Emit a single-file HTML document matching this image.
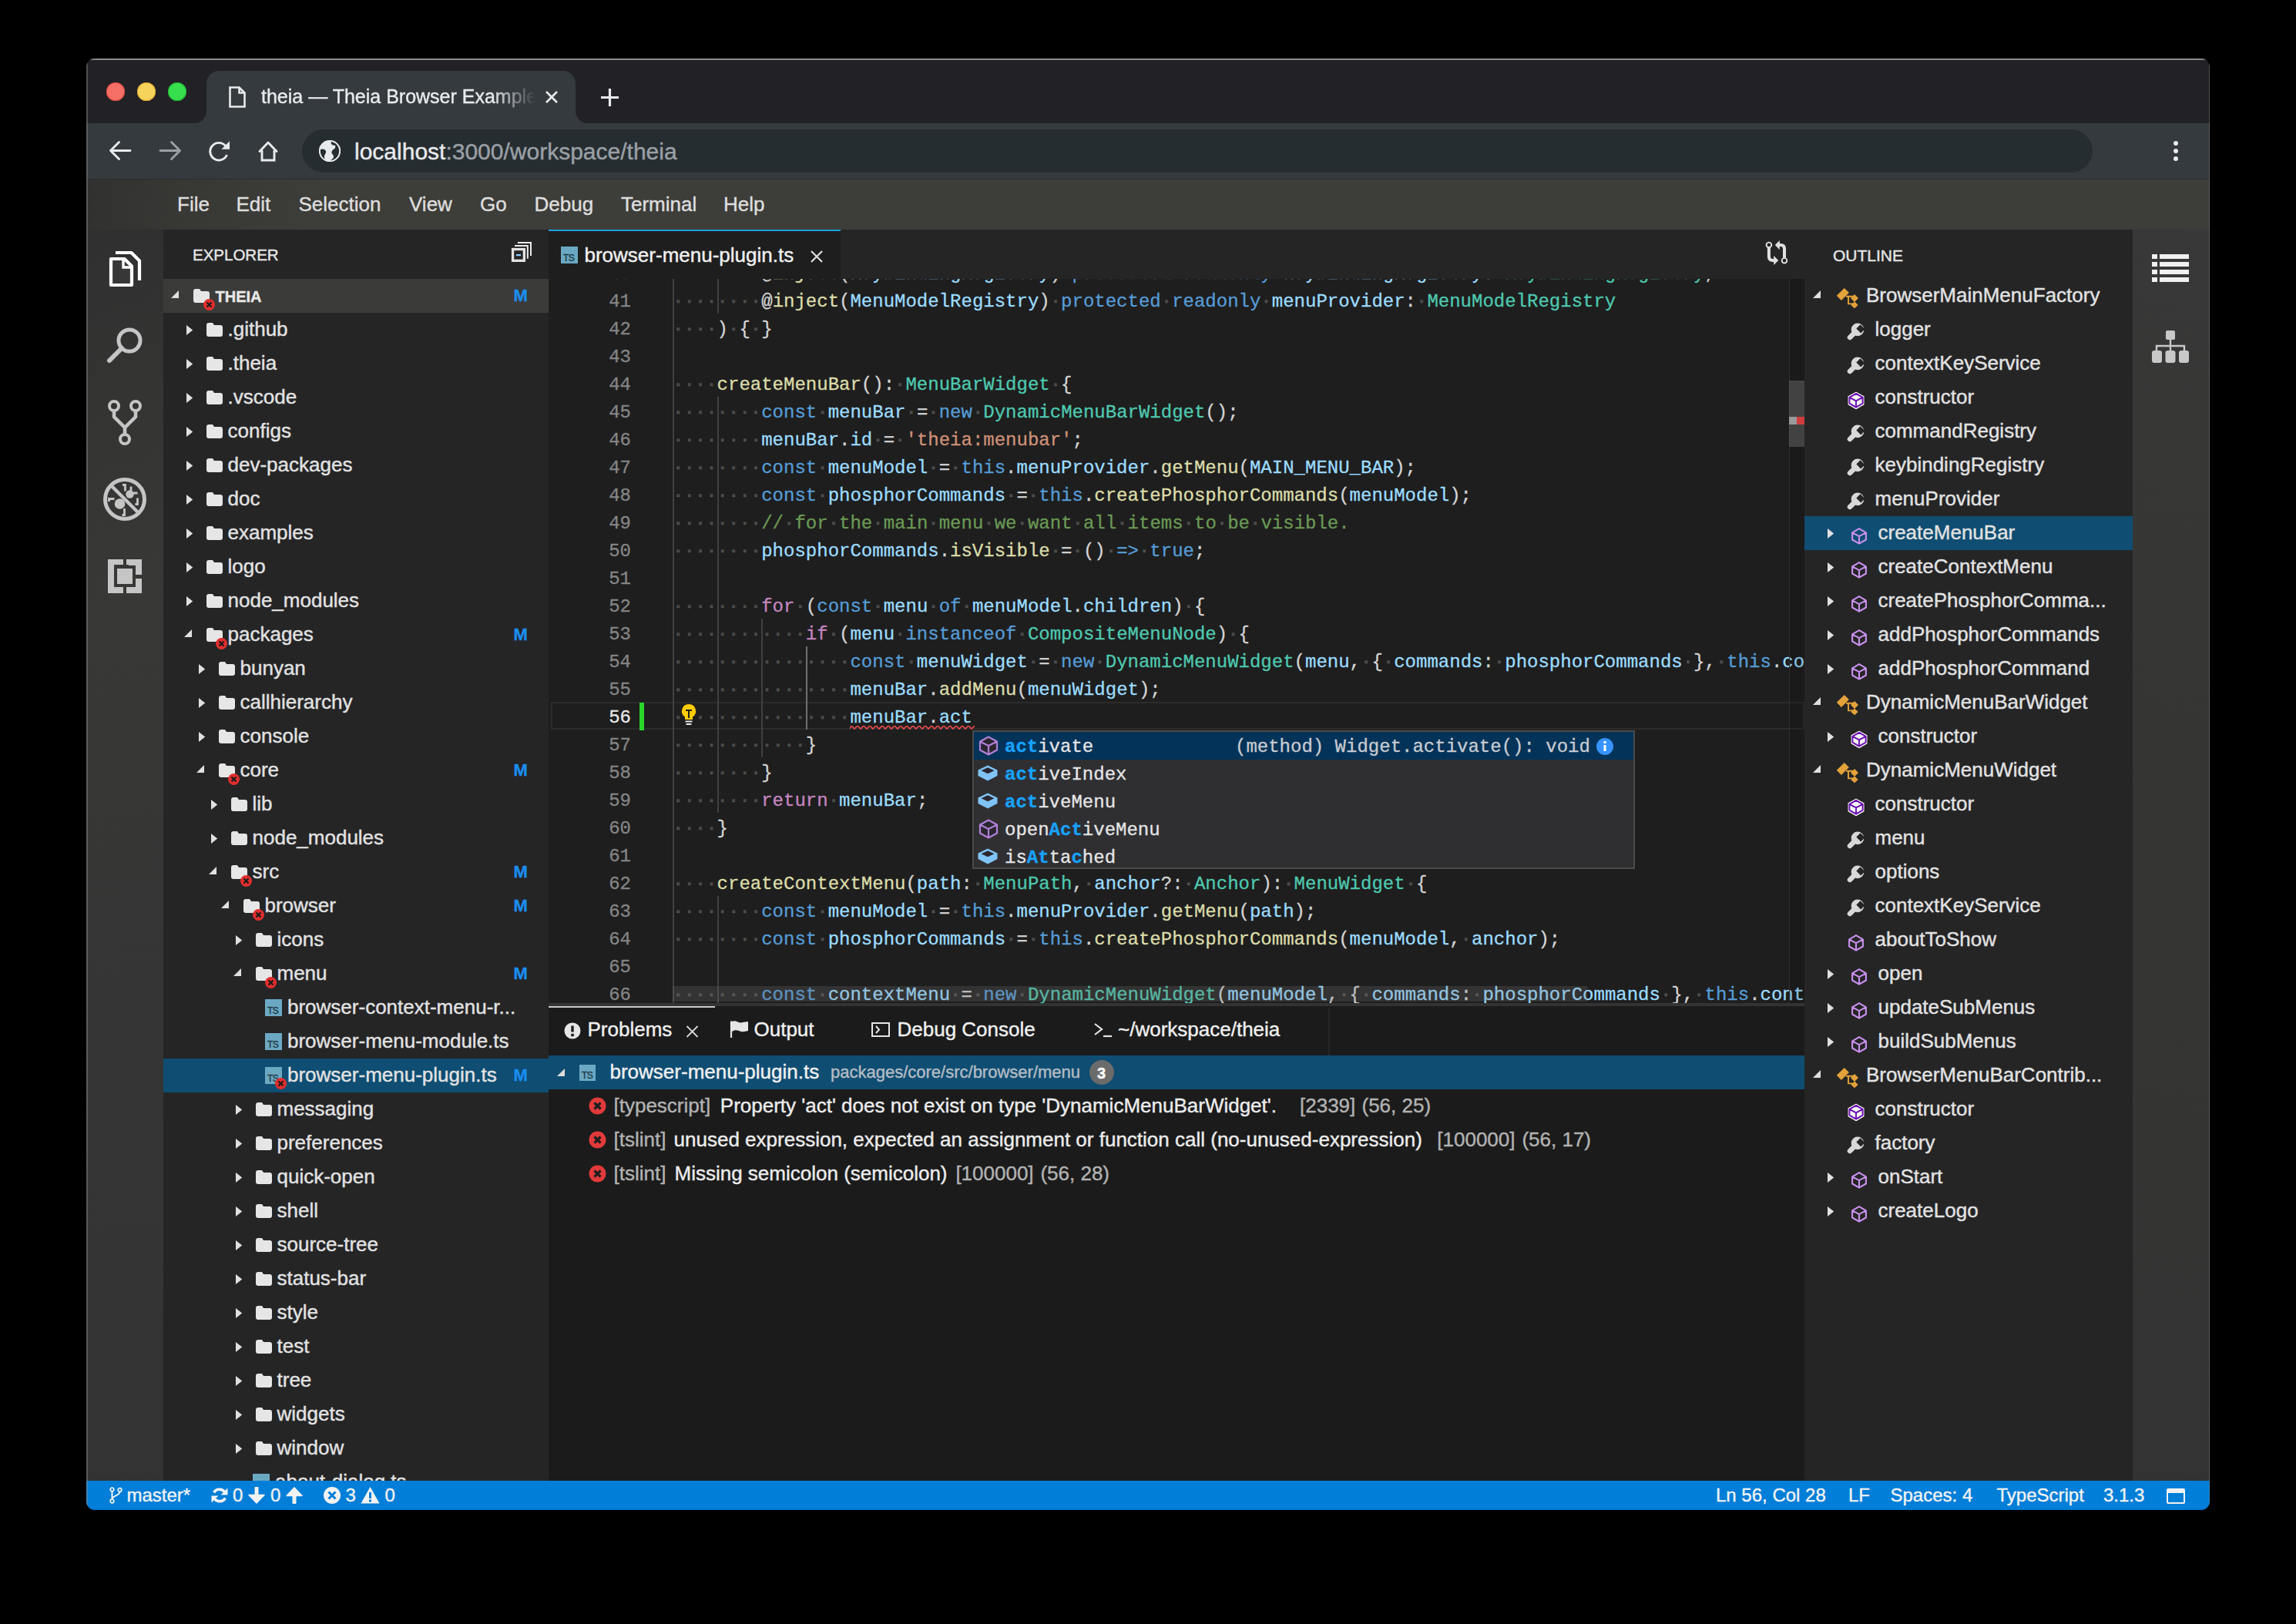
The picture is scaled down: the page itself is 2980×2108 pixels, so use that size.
<!DOCTYPE html><html><head><meta charset="utf-8"><style>
html,body{margin:0;padding:0;background:#000;width:2980px;height:2108px;overflow:hidden}
*{box-sizing:border-box}
.a{position:absolute}
.t{position:absolute;white-space:pre;font-family:"Liberation Sans",sans-serif;-webkit-text-stroke:0.4px currentColor}
.m{position:absolute;white-space:pre;font-family:"Liberation Mono",monospace;-webkit-text-stroke:0.3px currentColor}
#win{position:absolute;left:0;top:0;width:2980px;height:2108px;clip-path:inset(76px 112px 148px 112px round 11px);}

</style></head><body><div id="win">
<div class="a" style="left:112px;top:76px;width:2756px;height:84px;background:#212126;"></div>
<div class="a" style="left:138px;top:107px;width:24px;height:24px;border-radius:50%;background:#f46f66;box-shadow:inset 0 0 0 1px #e2463f;"></div>
<div class="a" style="left:178px;top:107px;width:24px;height:24px;border-radius:50%;background:#f6d35a;box-shadow:inset 0 0 0 1px #dfa62a;"></div>
<div class="a" style="left:218px;top:107px;width:24px;height:24px;border-radius:50%;background:#37df4e;box-shadow:inset 0 0 0 1px #1fb12e;"></div>
<div class="a" style="left:268px;top:92px;width:479px;height:68px;background:#343a3e;border-radius:16px 16px 0 0;"></div>
<div class="a" style="left:252px;top:144px;width:16px;height:16px;background:radial-gradient(circle at 0 0, #212126 15.5px, #343a3e 16.5px);"></div>
<div class="a" style="left:747px;top:144px;width:16px;height:16px;background:radial-gradient(circle at 100% 0, #212126 15.5px, #343a3e 16.5px);"></div>
<svg class="a" style="left:296px;top:111px;" width="24" height="30" viewBox="0 0 24 30"><path d="M2.5 2.5h12l7 7v18h-19z M14.5 2.5v7h7" fill="none" stroke="#e8eaed" stroke-width="2.6" stroke-linejoin="miter"/></svg>
<div class="a" style="left:339px;top:100px;width:356px;height:50px;overflow:hidden;-webkit-mask-image:linear-gradient(to right,#000 300px,transparent 356px);">
<div class="t" style="left:0;top:12.83px;font-size:25px;line-height:25px;color:#e8eaed;">theia — Theia Browser Example</div></div>
<svg class="a" style="left:706px;top:116px;" width="20" height="20" viewBox="0 0 20 20"><path d="M3 3L17 17M17 3L3 17" stroke="#e8eaed" stroke-width="2.6"/></svg>
<svg class="a" style="left:779px;top:114px;" width="25" height="25" viewBox="0 0 25 25"><path d="M12.5 1v23M1 12.5h23" stroke="#e8eaed" stroke-width="3.2"/></svg>
<div class="a" style="left:112px;top:160px;width:2756px;height:73px;background:#343a3e;"></div>
<div class="a" style="left:112px;top:232px;width:2756px;height:1px;background:#2a2c2c;"></div>
<svg class="a" style="left:140px;top:181px;" width="32" height="30" viewBox="0 0 32 30"><path d="M29 14.5H4.5M14.5 3.5L3.5 14.5L14.5 25.5" fill="none" stroke="#e8eaed" stroke-width="2.9" stroke-linecap="round" stroke-linejoin="round"/></svg>
<svg class="a" style="left:205px;top:181px;" width="32" height="30" viewBox="0 0 32 30"><path d="M3 14.5H27.5M17.5 3.5L28.5 14.5L17.5 25.5" fill="none" stroke="#9aa0a6" stroke-width="2.9" stroke-linecap="round" stroke-linejoin="round"/></svg>
<svg class="a" style="left:268px;top:180px;" width="32" height="32" viewBox="0 0 32 32"><path d="M24.8 9.5A11.3 11.3 0 1 0 26.5 21" fill="none" stroke="#e8eaed" stroke-width="2.9"/><path d="M30 3.2V13.8H19.4z" fill="#e8eaed"/></svg>
<svg class="a" style="left:332px;top:180px;" width="32" height="32" viewBox="0 0 32 32"><path d="M5 16.5L16 5L27 16.5" fill="none" stroke="#e8eaed" stroke-width="2.9" stroke-linecap="round" stroke-linejoin="round"/><path d="M8 15V28H24V15" fill="none" stroke="#e8eaed" stroke-width="2.9"/></svg>
<div class="a" style="left:392px;top:168px;width:2324px;height:56px;background:#262d30;border-radius:28px;"></div>
<svg class="a" style="left:414px;top:182px;" width="28" height="28" viewBox="0 0 28 28"><circle cx="14" cy="14" r="13.2" fill="#e8eaed"/><path d="M1.5 12C5 10.5 8.5 12 9 14.5C9.5 17 7 18.5 7 21.5C7 23 7.5 24 8 25C4 23 1.5 19 1.5 14z" fill="#262d30"/><path d="M16 1.5C15 4 16.5 6.5 19 6.5C21.5 6.5 22 8.5 20.5 10.5C19 12.5 17 12.5 16.5 15C16 17.5 18.5 18.5 19 20.5C19.5 22.5 18 24 16 25.5L14.5 26.5C20.5 26.5 26.5 21 26.5 14C26.5 8 22 2.5 16 1.5z" fill="#262d30"/><circle cx="14" cy="14" r="13.2" fill="none" stroke="#e8eaed" stroke-width="2"/></svg>
<div class="t" style="left:460px;top:181.60px;font-size:30px;line-height:30px;color:#e8eaed;">localhost<span style="color:#9aa0a6">:3000/workspace/theia</span></div>
<div class="a" style="left:2821px;top:183px;width:6.4px;height:6.4px;border-radius:50%;background:#e8eaed;"></div>
<div class="a" style="left:2821px;top:193px;width:6.4px;height:6.4px;border-radius:50%;background:#e8eaed;"></div>
<div class="a" style="left:2821px;top:203px;width:6.4px;height:6.4px;border-radius:50%;background:#e8eaed;"></div>
<div class="a" style="left:112px;top:233px;width:2756px;height:65px;background:linear-gradient(100deg,#31312f 0px,#383835 140px,#3d3d39 300px,#3d3d39 100%);"></div>
<div class="t" style="left:230px;top:252.49px;font-size:26px;line-height:26px;color:#dedede;">File</div>
<div class="t" style="left:306.5px;top:252.49px;font-size:26px;line-height:26px;color:#dedede;">Edit</div>
<div class="t" style="left:387.5px;top:252.49px;font-size:26px;line-height:26px;color:#dedede;">Selection</div>
<div class="t" style="left:531px;top:252.49px;font-size:26px;line-height:26px;color:#dedede;">View</div>
<div class="t" style="left:623px;top:252.49px;font-size:26px;line-height:26px;color:#dedede;">Go</div>
<div class="t" style="left:693.5px;top:252.49px;font-size:26px;line-height:26px;color:#dedede;">Debug</div>
<div class="t" style="left:806px;top:252.49px;font-size:26px;line-height:26px;color:#dedede;">Terminal</div>
<div class="t" style="left:939px;top:252.49px;font-size:26px;line-height:26px;color:#dedede;">Help</div>
<div class="a" style="left:112px;top:298px;width:100px;height:1624px;background:linear-gradient(160deg,#303030 0%,#383836 30%,#353535 60%,#333333 100%);"></div>
<svg class="a" style="left:140px;top:322px;" width="46" height="54" viewBox="0 0 46 54"><path d="M10 6H30.5L41 16.5V42" fill="none" stroke="#ffffff" stroke-width="4.2" stroke-linejoin="round"/><path d="M4 14H21.5L31 23.5V48H4z" fill="#373737" stroke="#ffffff" stroke-width="4.2" stroke-linejoin="round"/><path d="M20 14v11h11" fill="none" stroke="#ffffff" stroke-width="3.4"/></svg>
<svg class="a" style="left:136px;top:422px;" width="52" height="52" viewBox="0 0 52 52"><circle cx="32" cy="20" r="14" fill="none" stroke="#c5c5c5" stroke-width="5"/><path d="M22 30L6 46" stroke="#c5c5c5" stroke-width="6" stroke-linecap="round"/></svg>
<svg class="a" style="left:138px;top:518px;" width="48" height="62" viewBox="0 0 48 62"><circle cx="10" cy="9" r="6" fill="none" stroke="#c5c5c5" stroke-width="4"/><circle cx="38" cy="9" r="6" fill="none" stroke="#c5c5c5" stroke-width="4"/><circle cx="24" cy="52" r="6" fill="none" stroke="#c5c5c5" stroke-width="4"/><path d="M10 15v8l14 14v9M38 15v8L24 37" fill="none" stroke="#c5c5c5" stroke-width="4.5"/></svg>
<svg class="a" style="left:132px;top:618px;" width="60" height="60" viewBox="0 0 60 60"><circle cx="30" cy="30" r="25.5" fill="none" stroke="#c5c5c5" stroke-width="5"/><path d="M11 11L49 49" stroke="#c5c5c5" stroke-width="4.5"/><circle cx="23.5" cy="36" r="6.8" fill="#c5c5c5"/><circle cx="36.5" cy="23.5" r="5.2" fill="#c5c5c5"/><path d="M9.5 33v-3.5h7 M29.5 42v8.5h-3 M27 11.5h3.5v8 M38 13.5v7.5 M41 22h5.5 M46.5 28.5v8h-3" fill="none" stroke="#c5c5c5" stroke-width="2.8"/></svg>
<svg class="a" style="left:138px;top:724px;" width="48" height="48" viewBox="0 0 48 48"><path d="M2 2h20v7H10v29h12v8H2z M26 2h20v20h-8V10h-9v-1h-3z M26 38h12V27h8v19H26z" fill="#c5c5c5"/><rect x="14" y="14" width="20" height="20" fill="#c5c5c5"/></svg>
<div class="a" style="left:212px;top:298px;width:500px;height:1624px;background:#252526;"></div>
<div class="t" style="left:250px;top:321.14px;font-size:20.5px;line-height:20.5px;color:#e6e6e6;">EXPLORER</div>
<svg class="a" style="left:662px;top:312px;" width="30" height="30" viewBox="0 0 30 30"><rect x="3.55" y="11.55" width="14.8" height="14.8" fill="none" stroke="#e2e2e2" stroke-width="3.3"/><path d="M6 7H22.8V23.8 M9.9 2.9H27V20" fill="none" stroke="#ececec" stroke-width="2"/><rect x="8" y="18" width="6" height="2.2" fill="#8fd0ff"/></svg>
<div class="a" style="left:212px;top:362px;width:500px;height:44px;background:#3b3b39;"></div>
<svg class="a" style="left:220.5px;top:375.5px;" width="12" height="12" viewBox="0 0 12 12"><path d="M11 1V11H1z" fill="#e0e0e0"/></svg>
<svg class="a" style="left:251px;top:375px;" width="21" height="18" viewBox="0 0 21 18"><path d="M0 3Q0 0 3 0H8L10 3H18Q21 3 21 6V15Q21 18 18 18H3Q0 18 0 15z" fill="#e6e6e6"/></svg>
<svg class="a" style="left:262.5px;top:386.5px;" width="17.0" height="17.0" viewBox="0 0 17.0 17.0"><circle cx="8.5" cy="8.5" r="7.5" fill="#e02e2e" stroke="#252526" stroke-width="0"/><path d="M5.5 5.5L11.5 11.5M11.5 5.5L5.5 11.5" stroke="#1a1a1a" stroke-width="2.2"/></svg>
<div class="t" style="left:279.5px;top:374.57px;font-size:20px;line-height:20px;color:#e8e8e8;font-weight:bold;">THEIA</div>
<div class="t" style="left:666.5px;top:373.37px;font-size:22px;line-height:22px;color:#1a8ef0;font-weight:bold;">M</div>
<svg class="a" style="left:240.5px;top:421px;" width="10" height="16" viewBox="0 0 10 16"><path d="M1 1L9.2 7.4L1 13.9z" fill="#e0e0e0"/></svg>
<svg class="a" style="left:267.5px;top:419px;" width="21" height="18" viewBox="0 0 21 18"><path d="M0 3Q0 0 3 0H8L10 3H18Q21 3 21 6V15Q21 18 18 18H3Q0 18 0 15z" fill="#e6e6e6"/></svg>
<div class="t" style="left:295.5px;top:413.79px;font-size:26px;line-height:26px;color:#e2e2e2;">.github</div>
<svg class="a" style="left:240.5px;top:465px;" width="10" height="16" viewBox="0 0 10 16"><path d="M1 1L9.2 7.4L1 13.9z" fill="#e0e0e0"/></svg>
<svg class="a" style="left:267.5px;top:463px;" width="21" height="18" viewBox="0 0 21 18"><path d="M0 3Q0 0 3 0H8L10 3H18Q21 3 21 6V15Q21 18 18 18H3Q0 18 0 15z" fill="#e6e6e6"/></svg>
<div class="t" style="left:295.5px;top:457.79px;font-size:26px;line-height:26px;color:#e2e2e2;">.theia</div>
<svg class="a" style="left:240.5px;top:509px;" width="10" height="16" viewBox="0 0 10 16"><path d="M1 1L9.2 7.4L1 13.9z" fill="#e0e0e0"/></svg>
<svg class="a" style="left:267.5px;top:507px;" width="21" height="18" viewBox="0 0 21 18"><path d="M0 3Q0 0 3 0H8L10 3H18Q21 3 21 6V15Q21 18 18 18H3Q0 18 0 15z" fill="#e6e6e6"/></svg>
<div class="t" style="left:295.5px;top:501.79px;font-size:26px;line-height:26px;color:#e2e2e2;">.vscode</div>
<svg class="a" style="left:240.5px;top:553px;" width="10" height="16" viewBox="0 0 10 16"><path d="M1 1L9.2 7.4L1 13.9z" fill="#e0e0e0"/></svg>
<svg class="a" style="left:267.5px;top:551px;" width="21" height="18" viewBox="0 0 21 18"><path d="M0 3Q0 0 3 0H8L10 3H18Q21 3 21 6V15Q21 18 18 18H3Q0 18 0 15z" fill="#e6e6e6"/></svg>
<div class="t" style="left:295.5px;top:545.79px;font-size:26px;line-height:26px;color:#e2e2e2;">configs</div>
<svg class="a" style="left:240.5px;top:597px;" width="10" height="16" viewBox="0 0 10 16"><path d="M1 1L9.2 7.4L1 13.9z" fill="#e0e0e0"/></svg>
<svg class="a" style="left:267.5px;top:595px;" width="21" height="18" viewBox="0 0 21 18"><path d="M0 3Q0 0 3 0H8L10 3H18Q21 3 21 6V15Q21 18 18 18H3Q0 18 0 15z" fill="#e6e6e6"/></svg>
<div class="t" style="left:295.5px;top:589.79px;font-size:26px;line-height:26px;color:#e2e2e2;">dev-packages</div>
<svg class="a" style="left:240.5px;top:641px;" width="10" height="16" viewBox="0 0 10 16"><path d="M1 1L9.2 7.4L1 13.9z" fill="#e0e0e0"/></svg>
<svg class="a" style="left:267.5px;top:639px;" width="21" height="18" viewBox="0 0 21 18"><path d="M0 3Q0 0 3 0H8L10 3H18Q21 3 21 6V15Q21 18 18 18H3Q0 18 0 15z" fill="#e6e6e6"/></svg>
<div class="t" style="left:295.5px;top:633.79px;font-size:26px;line-height:26px;color:#e2e2e2;">doc</div>
<svg class="a" style="left:240.5px;top:685px;" width="10" height="16" viewBox="0 0 10 16"><path d="M1 1L9.2 7.4L1 13.9z" fill="#e0e0e0"/></svg>
<svg class="a" style="left:267.5px;top:683px;" width="21" height="18" viewBox="0 0 21 18"><path d="M0 3Q0 0 3 0H8L10 3H18Q21 3 21 6V15Q21 18 18 18H3Q0 18 0 15z" fill="#e6e6e6"/></svg>
<div class="t" style="left:295.5px;top:677.79px;font-size:26px;line-height:26px;color:#e2e2e2;">examples</div>
<svg class="a" style="left:240.5px;top:729px;" width="10" height="16" viewBox="0 0 10 16"><path d="M1 1L9.2 7.4L1 13.9z" fill="#e0e0e0"/></svg>
<svg class="a" style="left:267.5px;top:727px;" width="21" height="18" viewBox="0 0 21 18"><path d="M0 3Q0 0 3 0H8L10 3H18Q21 3 21 6V15Q21 18 18 18H3Q0 18 0 15z" fill="#e6e6e6"/></svg>
<div class="t" style="left:295.5px;top:721.79px;font-size:26px;line-height:26px;color:#e2e2e2;">logo</div>
<svg class="a" style="left:240.5px;top:773px;" width="10" height="16" viewBox="0 0 10 16"><path d="M1 1L9.2 7.4L1 13.9z" fill="#e0e0e0"/></svg>
<svg class="a" style="left:267.5px;top:771px;" width="21" height="18" viewBox="0 0 21 18"><path d="M0 3Q0 0 3 0H8L10 3H18Q21 3 21 6V15Q21 18 18 18H3Q0 18 0 15z" fill="#e6e6e6"/></svg>
<div class="t" style="left:295.5px;top:765.79px;font-size:26px;line-height:26px;color:#e2e2e2;">node_modules</div>
<svg class="a" style="left:237.5px;top:815.5px;" width="12" height="12" viewBox="0 0 12 12"><path d="M11 1V11H1z" fill="#e0e0e0"/></svg>
<svg class="a" style="left:267.5px;top:815px;" width="21" height="18" viewBox="0 0 21 18"><path d="M0 3Q0 0 3 0H8L10 3H18Q21 3 21 6V15Q21 18 18 18H3Q0 18 0 15z" fill="#e6e6e6"/></svg>
<svg class="a" style="left:279.0px;top:826.5px;" width="17.0" height="17.0" viewBox="0 0 17.0 17.0"><circle cx="8.5" cy="8.5" r="7.5" fill="#e02e2e" stroke="#252526" stroke-width="0"/><path d="M5.5 5.5L11.5 11.5M11.5 5.5L5.5 11.5" stroke="#1a1a1a" stroke-width="2.2"/></svg>
<div class="t" style="left:295.5px;top:809.79px;font-size:26px;line-height:26px;color:#e2e2e2;">packages</div>
<div class="t" style="left:666.5px;top:813.37px;font-size:22px;line-height:22px;color:#1a8ef0;font-weight:bold;">M</div>
<svg class="a" style="left:256.5px;top:861px;" width="10" height="16" viewBox="0 0 10 16"><path d="M1 1L9.2 7.4L1 13.9z" fill="#e0e0e0"/></svg>
<svg class="a" style="left:283.5px;top:859px;" width="21" height="18" viewBox="0 0 21 18"><path d="M0 3Q0 0 3 0H8L10 3H18Q21 3 21 6V15Q21 18 18 18H3Q0 18 0 15z" fill="#e6e6e6"/></svg>
<div class="t" style="left:311.5px;top:853.79px;font-size:26px;line-height:26px;color:#e2e2e2;">bunyan</div>
<svg class="a" style="left:256.5px;top:905px;" width="10" height="16" viewBox="0 0 10 16"><path d="M1 1L9.2 7.4L1 13.9z" fill="#e0e0e0"/></svg>
<svg class="a" style="left:283.5px;top:903px;" width="21" height="18" viewBox="0 0 21 18"><path d="M0 3Q0 0 3 0H8L10 3H18Q21 3 21 6V15Q21 18 18 18H3Q0 18 0 15z" fill="#e6e6e6"/></svg>
<div class="t" style="left:311.5px;top:897.79px;font-size:26px;line-height:26px;color:#e2e2e2;">callhierarchy</div>
<svg class="a" style="left:256.5px;top:949px;" width="10" height="16" viewBox="0 0 10 16"><path d="M1 1L9.2 7.4L1 13.9z" fill="#e0e0e0"/></svg>
<svg class="a" style="left:283.5px;top:947px;" width="21" height="18" viewBox="0 0 21 18"><path d="M0 3Q0 0 3 0H8L10 3H18Q21 3 21 6V15Q21 18 18 18H3Q0 18 0 15z" fill="#e6e6e6"/></svg>
<div class="t" style="left:311.5px;top:941.79px;font-size:26px;line-height:26px;color:#e2e2e2;">console</div>
<svg class="a" style="left:253.5px;top:991.5px;" width="12" height="12" viewBox="0 0 12 12"><path d="M11 1V11H1z" fill="#e0e0e0"/></svg>
<svg class="a" style="left:283.5px;top:991px;" width="21" height="18" viewBox="0 0 21 18"><path d="M0 3Q0 0 3 0H8L10 3H18Q21 3 21 6V15Q21 18 18 18H3Q0 18 0 15z" fill="#e6e6e6"/></svg>
<svg class="a" style="left:295.0px;top:1002.5px;" width="17.0" height="17.0" viewBox="0 0 17.0 17.0"><circle cx="8.5" cy="8.5" r="7.5" fill="#e02e2e" stroke="#252526" stroke-width="0"/><path d="M5.5 5.5L11.5 11.5M11.5 5.5L5.5 11.5" stroke="#1a1a1a" stroke-width="2.2"/></svg>
<div class="t" style="left:311.5px;top:985.79px;font-size:26px;line-height:26px;color:#e2e2e2;">core</div>
<div class="t" style="left:666.5px;top:989.37px;font-size:22px;line-height:22px;color:#1a8ef0;font-weight:bold;">M</div>
<svg class="a" style="left:272.5px;top:1037px;" width="10" height="16" viewBox="0 0 10 16"><path d="M1 1L9.2 7.4L1 13.9z" fill="#e0e0e0"/></svg>
<svg class="a" style="left:299.5px;top:1035px;" width="21" height="18" viewBox="0 0 21 18"><path d="M0 3Q0 0 3 0H8L10 3H18Q21 3 21 6V15Q21 18 18 18H3Q0 18 0 15z" fill="#e6e6e6"/></svg>
<div class="t" style="left:327.5px;top:1029.79px;font-size:26px;line-height:26px;color:#e2e2e2;">lib</div>
<svg class="a" style="left:272.5px;top:1081px;" width="10" height="16" viewBox="0 0 10 16"><path d="M1 1L9.2 7.4L1 13.9z" fill="#e0e0e0"/></svg>
<svg class="a" style="left:299.5px;top:1079px;" width="21" height="18" viewBox="0 0 21 18"><path d="M0 3Q0 0 3 0H8L10 3H18Q21 3 21 6V15Q21 18 18 18H3Q0 18 0 15z" fill="#e6e6e6"/></svg>
<div class="t" style="left:327.5px;top:1073.79px;font-size:26px;line-height:26px;color:#e2e2e2;">node_modules</div>
<svg class="a" style="left:269.5px;top:1123.5px;" width="12" height="12" viewBox="0 0 12 12"><path d="M11 1V11H1z" fill="#e0e0e0"/></svg>
<svg class="a" style="left:299.5px;top:1123px;" width="21" height="18" viewBox="0 0 21 18"><path d="M0 3Q0 0 3 0H8L10 3H18Q21 3 21 6V15Q21 18 18 18H3Q0 18 0 15z" fill="#e6e6e6"/></svg>
<svg class="a" style="left:311.0px;top:1134.5px;" width="17.0" height="17.0" viewBox="0 0 17.0 17.0"><circle cx="8.5" cy="8.5" r="7.5" fill="#e02e2e" stroke="#252526" stroke-width="0"/><path d="M5.5 5.5L11.5 11.5M11.5 5.5L5.5 11.5" stroke="#1a1a1a" stroke-width="2.2"/></svg>
<div class="t" style="left:327.5px;top:1117.79px;font-size:26px;line-height:26px;color:#e2e2e2;">src</div>
<div class="t" style="left:666.5px;top:1121.37px;font-size:22px;line-height:22px;color:#1a8ef0;font-weight:bold;">M</div>
<svg class="a" style="left:285.5px;top:1167.5px;" width="12" height="12" viewBox="0 0 12 12"><path d="M11 1V11H1z" fill="#e0e0e0"/></svg>
<svg class="a" style="left:315.5px;top:1167px;" width="21" height="18" viewBox="0 0 21 18"><path d="M0 3Q0 0 3 0H8L10 3H18Q21 3 21 6V15Q21 18 18 18H3Q0 18 0 15z" fill="#e6e6e6"/></svg>
<svg class="a" style="left:327.0px;top:1178.5px;" width="17.0" height="17.0" viewBox="0 0 17.0 17.0"><circle cx="8.5" cy="8.5" r="7.5" fill="#e02e2e" stroke="#252526" stroke-width="0"/><path d="M5.5 5.5L11.5 11.5M11.5 5.5L5.5 11.5" stroke="#1a1a1a" stroke-width="2.2"/></svg>
<div class="t" style="left:343.5px;top:1161.79px;font-size:26px;line-height:26px;color:#e2e2e2;">browser</div>
<div class="t" style="left:666.5px;top:1165.37px;font-size:22px;line-height:22px;color:#1a8ef0;font-weight:bold;">M</div>
<svg class="a" style="left:304.5px;top:1213px;" width="10" height="16" viewBox="0 0 10 16"><path d="M1 1L9.2 7.4L1 13.9z" fill="#e0e0e0"/></svg>
<svg class="a" style="left:331.5px;top:1211px;" width="21" height="18" viewBox="0 0 21 18"><path d="M0 3Q0 0 3 0H8L10 3H18Q21 3 21 6V15Q21 18 18 18H3Q0 18 0 15z" fill="#e6e6e6"/></svg>
<div class="t" style="left:359.5px;top:1205.79px;font-size:26px;line-height:26px;color:#e2e2e2;">icons</div>
<svg class="a" style="left:301.5px;top:1255.5px;" width="12" height="12" viewBox="0 0 12 12"><path d="M11 1V11H1z" fill="#e0e0e0"/></svg>
<svg class="a" style="left:331.5px;top:1255px;" width="21" height="18" viewBox="0 0 21 18"><path d="M0 3Q0 0 3 0H8L10 3H18Q21 3 21 6V15Q21 18 18 18H3Q0 18 0 15z" fill="#e6e6e6"/></svg>
<svg class="a" style="left:343.0px;top:1266.5px;" width="17.0" height="17.0" viewBox="0 0 17.0 17.0"><circle cx="8.5" cy="8.5" r="7.5" fill="#e02e2e" stroke="#252526" stroke-width="0"/><path d="M5.5 5.5L11.5 11.5M11.5 5.5L5.5 11.5" stroke="#1a1a1a" stroke-width="2.2"/></svg>
<div class="t" style="left:359.5px;top:1249.79px;font-size:26px;line-height:26px;color:#e2e2e2;">menu</div>
<div class="t" style="left:666.5px;top:1253.37px;font-size:22px;line-height:22px;color:#1a8ef0;font-weight:bold;">M</div>
<div class="a" style="left:344px;top:1297.0px;width:22px;height:22px;background:#6ba9c3;"></div>
<div class="t" style="left:347px;top:1306px;font-size:12px;line-height:12px;color:#1f3a46;letter-spacing:-0.5px;">TS</div>
<div class="t" style="left:373px;top:1293.79px;font-size:26px;line-height:26px;color:#e2e2e2;">browser-context-menu-r...</div>
<div class="a" style="left:344px;top:1341.0px;width:22px;height:22px;background:#6ba9c3;"></div>
<div class="t" style="left:347px;top:1350px;font-size:12px;line-height:12px;color:#1f3a46;letter-spacing:-0.5px;">TS</div>
<div class="t" style="left:373px;top:1337.79px;font-size:26px;line-height:26px;color:#e2e2e2;">browser-menu-module.ts</div>
<div class="a" style="left:212px;top:1374px;width:508px;height:44px;background:#0f4d72;"></div>
<div class="a" style="left:344px;top:1385.0px;width:22px;height:22px;background:#6ba9c3;"></div>
<div class="t" style="left:347px;top:1394px;font-size:12px;line-height:12px;color:#1f3a46;letter-spacing:-0.5px;">TS</div>
<svg class="a" style="left:355.5px;top:1397.5px;" width="17.0" height="17.0" viewBox="0 0 17.0 17.0"><circle cx="8.5" cy="8.5" r="7.5" fill="#e02e2e" stroke="#252526" stroke-width="0"/><path d="M5.5 5.5L11.5 11.5M11.5 5.5L5.5 11.5" stroke="#1a1a1a" stroke-width="2.2"/></svg>
<div class="t" style="left:373px;top:1381.79px;font-size:26px;line-height:26px;color:#e2e2e2;">browser-menu-plugin.ts</div>
<div class="t" style="left:666.5px;top:1385.37px;font-size:22px;line-height:22px;color:#1a8ef0;font-weight:bold;">M</div>
<svg class="a" style="left:304.5px;top:1433px;" width="10" height="16" viewBox="0 0 10 16"><path d="M1 1L9.2 7.4L1 13.9z" fill="#e0e0e0"/></svg>
<svg class="a" style="left:331.5px;top:1431px;" width="21" height="18" viewBox="0 0 21 18"><path d="M0 3Q0 0 3 0H8L10 3H18Q21 3 21 6V15Q21 18 18 18H3Q0 18 0 15z" fill="#e6e6e6"/></svg>
<div class="t" style="left:359.5px;top:1425.79px;font-size:26px;line-height:26px;color:#e2e2e2;">messaging</div>
<svg class="a" style="left:304.5px;top:1477px;" width="10" height="16" viewBox="0 0 10 16"><path d="M1 1L9.2 7.4L1 13.9z" fill="#e0e0e0"/></svg>
<svg class="a" style="left:331.5px;top:1475px;" width="21" height="18" viewBox="0 0 21 18"><path d="M0 3Q0 0 3 0H8L10 3H18Q21 3 21 6V15Q21 18 18 18H3Q0 18 0 15z" fill="#e6e6e6"/></svg>
<div class="t" style="left:359.5px;top:1469.79px;font-size:26px;line-height:26px;color:#e2e2e2;">preferences</div>
<svg class="a" style="left:304.5px;top:1521px;" width="10" height="16" viewBox="0 0 10 16"><path d="M1 1L9.2 7.4L1 13.9z" fill="#e0e0e0"/></svg>
<svg class="a" style="left:331.5px;top:1519px;" width="21" height="18" viewBox="0 0 21 18"><path d="M0 3Q0 0 3 0H8L10 3H18Q21 3 21 6V15Q21 18 18 18H3Q0 18 0 15z" fill="#e6e6e6"/></svg>
<div class="t" style="left:359.5px;top:1513.79px;font-size:26px;line-height:26px;color:#e2e2e2;">quick-open</div>
<svg class="a" style="left:304.5px;top:1565px;" width="10" height="16" viewBox="0 0 10 16"><path d="M1 1L9.2 7.4L1 13.9z" fill="#e0e0e0"/></svg>
<svg class="a" style="left:331.5px;top:1563px;" width="21" height="18" viewBox="0 0 21 18"><path d="M0 3Q0 0 3 0H8L10 3H18Q21 3 21 6V15Q21 18 18 18H3Q0 18 0 15z" fill="#e6e6e6"/></svg>
<div class="t" style="left:359.5px;top:1557.79px;font-size:26px;line-height:26px;color:#e2e2e2;">shell</div>
<svg class="a" style="left:304.5px;top:1609px;" width="10" height="16" viewBox="0 0 10 16"><path d="M1 1L9.2 7.4L1 13.9z" fill="#e0e0e0"/></svg>
<svg class="a" style="left:331.5px;top:1607px;" width="21" height="18" viewBox="0 0 21 18"><path d="M0 3Q0 0 3 0H8L10 3H18Q21 3 21 6V15Q21 18 18 18H3Q0 18 0 15z" fill="#e6e6e6"/></svg>
<div class="t" style="left:359.5px;top:1601.79px;font-size:26px;line-height:26px;color:#e2e2e2;">source-tree</div>
<svg class="a" style="left:304.5px;top:1653px;" width="10" height="16" viewBox="0 0 10 16"><path d="M1 1L9.2 7.4L1 13.9z" fill="#e0e0e0"/></svg>
<svg class="a" style="left:331.5px;top:1651px;" width="21" height="18" viewBox="0 0 21 18"><path d="M0 3Q0 0 3 0H8L10 3H18Q21 3 21 6V15Q21 18 18 18H3Q0 18 0 15z" fill="#e6e6e6"/></svg>
<div class="t" style="left:359.5px;top:1645.79px;font-size:26px;line-height:26px;color:#e2e2e2;">status-bar</div>
<svg class="a" style="left:304.5px;top:1697px;" width="10" height="16" viewBox="0 0 10 16"><path d="M1 1L9.2 7.4L1 13.9z" fill="#e0e0e0"/></svg>
<svg class="a" style="left:331.5px;top:1695px;" width="21" height="18" viewBox="0 0 21 18"><path d="M0 3Q0 0 3 0H8L10 3H18Q21 3 21 6V15Q21 18 18 18H3Q0 18 0 15z" fill="#e6e6e6"/></svg>
<div class="t" style="left:359.5px;top:1689.79px;font-size:26px;line-height:26px;color:#e2e2e2;">style</div>
<svg class="a" style="left:304.5px;top:1741px;" width="10" height="16" viewBox="0 0 10 16"><path d="M1 1L9.2 7.4L1 13.9z" fill="#e0e0e0"/></svg>
<svg class="a" style="left:331.5px;top:1739px;" width="21" height="18" viewBox="0 0 21 18"><path d="M0 3Q0 0 3 0H8L10 3H18Q21 3 21 6V15Q21 18 18 18H3Q0 18 0 15z" fill="#e6e6e6"/></svg>
<div class="t" style="left:359.5px;top:1733.79px;font-size:26px;line-height:26px;color:#e2e2e2;">test</div>
<svg class="a" style="left:304.5px;top:1785px;" width="10" height="16" viewBox="0 0 10 16"><path d="M1 1L9.2 7.4L1 13.9z" fill="#e0e0e0"/></svg>
<svg class="a" style="left:331.5px;top:1783px;" width="21" height="18" viewBox="0 0 21 18"><path d="M0 3Q0 0 3 0H8L10 3H18Q21 3 21 6V15Q21 18 18 18H3Q0 18 0 15z" fill="#e6e6e6"/></svg>
<div class="t" style="left:359.5px;top:1777.79px;font-size:26px;line-height:26px;color:#e2e2e2;">tree</div>
<svg class="a" style="left:304.5px;top:1829px;" width="10" height="16" viewBox="0 0 10 16"><path d="M1 1L9.2 7.4L1 13.9z" fill="#e0e0e0"/></svg>
<svg class="a" style="left:331.5px;top:1827px;" width="21" height="18" viewBox="0 0 21 18"><path d="M0 3Q0 0 3 0H8L10 3H18Q21 3 21 6V15Q21 18 18 18H3Q0 18 0 15z" fill="#e6e6e6"/></svg>
<div class="t" style="left:359.5px;top:1821.79px;font-size:26px;line-height:26px;color:#e2e2e2;">widgets</div>
<svg class="a" style="left:304.5px;top:1873px;" width="10" height="16" viewBox="0 0 10 16"><path d="M1 1L9.2 7.4L1 13.9z" fill="#e0e0e0"/></svg>
<svg class="a" style="left:331.5px;top:1871px;" width="21" height="18" viewBox="0 0 21 18"><path d="M0 3Q0 0 3 0H8L10 3H18Q21 3 21 6V15Q21 18 18 18H3Q0 18 0 15z" fill="#e6e6e6"/></svg>
<div class="t" style="left:359.5px;top:1865.79px;font-size:26px;line-height:26px;color:#e2e2e2;">window</div>
<div class="a" style="left:328px;top:1913.0px;width:22px;height:22px;background:#6ba9c3;"></div>
<div class="t" style="left:331px;top:1922px;font-size:12px;line-height:12px;color:#1f3a46;letter-spacing:-0.5px;">TS</div>
<div class="t" style="left:357px;top:1909.79px;font-size:26px;line-height:26px;color:#e2e2e2;">about-dialog.ts</div>
<div class="a" style="left:712px;top:298px;width:1630px;height:64px;background:#252526;"></div>
<div class="a" style="left:712px;top:298px;width:379px;height:64px;background:#1e1e1e;"></div>
<div class="a" style="left:712px;top:298px;width:379px;height:2px;background:#1aa0e0;"></div>
<div class="a" style="left:728px;top:320.0px;width:22px;height:22px;background:#6ba9c3;"></div>
<div class="t" style="left:731px;top:329px;font-size:12px;line-height:12px;color:#1f3a46;letter-spacing:-0.5px;">TS</div>
<div class="t" style="left:758.5px;top:317.99px;font-size:26px;line-height:26px;color:#f0f0f0;">browser-menu-plugin.ts</div>
<svg class="a" style="left:1051px;top:324px;" width="18" height="18" viewBox="0 0 18 18"><path d="M2 2L16 16M16 2L2 16" stroke="#e0e0e0" stroke-width="2.2"/></svg>
<svg class="a" style="left:2286px;top:308px;" width="36" height="42" viewBox="0 0 36 42"><circle cx="9.9" cy="9.9" r="3.3" fill="none" stroke="#e0e0e0" stroke-width="1.9"/><circle cx="30" cy="30.2" r="3.3" fill="none" stroke="#e0e0e0" stroke-width="1.9"/><path d="M9.9 13.2V25Q9.9 30 15 30H17.5 M30 27V15Q30 10.1 25 10.1H22.5" fill="none" stroke="#e0e0e0" stroke-width="4"/><path d="M22.2 30L16.2 24V36z M17.8 10.1L23.8 4V16.2z" fill="#e0e0e0"/></svg>
<div class="a" style="left:712px;top:362px;width:1630px;height:940px;background:#1e1e1e;"></div>
<div class="a" style="left:712px;top:362px;width:1630px;height:940px;overflow:hidden;">
<div class="a" style="left:3px;top:549px;width:1627px;height:36px;border:2px solid #2c2c2c;"></div>
<div class="a" style="left:161.0px;top:-27px;width:2px;height:972px;background:#404040;"></div>
<div class="a" style="left:218.7px;top:-27px;width:2px;height:72px;background:#404040;"></div>
<div class="a" style="left:218.7px;top:153px;width:2px;height:540px;background:#404040;"></div>
<div class="a" style="left:218.7px;top:801px;width:2px;height:144px;background:#404040;"></div>
<div class="a" style="left:276.4px;top:441px;width:2px;height:180px;background:#404040;"></div>
<div class="a" style="left:334.2px;top:477px;width:2px;height:108px;background:#707070;"></div>
<div class="m" style="right:1523px;top:-23.7px;font-size:24px;line-height:36px;color:#858585;text-align:right;">40</div>
<div class="m" style="left:161px;top:-23.7px;font-size:24px;line-height:36px;"><span style="color:rgba(227,228,226,0.22);font-weight:bold">········</span><span style="color:#d4d4d4">@</span><span style="color:#dcdcaa">inject</span><span style="color:#d4d4d4">(</span><span style="color:#9cdcfe">KeybindingRegistry</span><span style="color:#d4d4d4">)</span><span style="color:rgba(227,228,226,0.22);font-weight:bold">·</span><span style="color:#569cd6">protected</span><span style="color:rgba(227,228,226,0.22);font-weight:bold">·</span><span style="color:#569cd6">readonly</span><span style="color:rgba(227,228,226,0.22);font-weight:bold">·</span><span style="color:#9cdcfe">keybindingRegistry</span><span style="color:#d4d4d4">:</span><span style="color:rgba(227,228,226,0.22);font-weight:bold">·</span><span style="color:#4ec9b0">KeybindingRegistry</span><span style="color:#d4d4d4">,</span></div>
<div class="m" style="right:1523px;top:12.3px;font-size:24px;line-height:36px;color:#858585;text-align:right;">41</div>
<div class="m" style="left:161px;top:12.3px;font-size:24px;line-height:36px;"><span style="color:rgba(227,228,226,0.22);font-weight:bold">········</span><span style="color:#d4d4d4">@</span><span style="color:#dcdcaa">inject</span><span style="color:#d4d4d4">(</span><span style="color:#9cdcfe">MenuModelRegistry</span><span style="color:#d4d4d4">)</span><span style="color:rgba(227,228,226,0.22);font-weight:bold">·</span><span style="color:#569cd6">protected</span><span style="color:rgba(227,228,226,0.22);font-weight:bold">·</span><span style="color:#569cd6">readonly</span><span style="color:rgba(227,228,226,0.22);font-weight:bold">·</span><span style="color:#9cdcfe">menuProvider</span><span style="color:#d4d4d4">:</span><span style="color:rgba(227,228,226,0.22);font-weight:bold">·</span><span style="color:#4ec9b0">MenuModelRegistry</span></div>
<div class="m" style="right:1523px;top:48.3px;font-size:24px;line-height:36px;color:#858585;text-align:right;">42</div>
<div class="m" style="left:161px;top:48.3px;font-size:24px;line-height:36px;"><span style="color:rgba(227,228,226,0.22);font-weight:bold">····</span><span style="color:#d4d4d4">)</span><span style="color:rgba(227,228,226,0.22);font-weight:bold">·</span><span style="color:#d4d4d4">{</span><span style="color:rgba(227,228,226,0.22);font-weight:bold">·</span><span style="color:#d4d4d4">}</span></div>
<div class="m" style="right:1523px;top:84.3px;font-size:24px;line-height:36px;color:#858585;text-align:right;">43</div>
<div class="m" style="right:1523px;top:120.3px;font-size:24px;line-height:36px;color:#858585;text-align:right;">44</div>
<div class="m" style="left:161px;top:120.3px;font-size:24px;line-height:36px;"><span style="color:rgba(227,228,226,0.22);font-weight:bold">····</span><span style="color:#dcdcaa">createMenuBar</span><span style="color:#d4d4d4">():</span><span style="color:rgba(227,228,226,0.22);font-weight:bold">·</span><span style="color:#4ec9b0">MenuBarWidget</span><span style="color:rgba(227,228,226,0.22);font-weight:bold">·</span><span style="color:#d4d4d4">{</span></div>
<div class="m" style="right:1523px;top:156.3px;font-size:24px;line-height:36px;color:#858585;text-align:right;">45</div>
<div class="m" style="left:161px;top:156.3px;font-size:24px;line-height:36px;"><span style="color:rgba(227,228,226,0.22);font-weight:bold">········</span><span style="color:#569cd6">const</span><span style="color:rgba(227,228,226,0.22);font-weight:bold">·</span><span style="color:#9cdcfe">menuBar</span><span style="color:rgba(227,228,226,0.22);font-weight:bold">·</span><span style="color:#d4d4d4">=</span><span style="color:rgba(227,228,226,0.22);font-weight:bold">·</span><span style="color:#569cd6">new</span><span style="color:rgba(227,228,226,0.22);font-weight:bold">·</span><span style="color:#4ec9b0">DynamicMenuBarWidget</span><span style="color:#d4d4d4">();</span></div>
<div class="m" style="right:1523px;top:192.3px;font-size:24px;line-height:36px;color:#858585;text-align:right;">46</div>
<div class="m" style="left:161px;top:192.3px;font-size:24px;line-height:36px;"><span style="color:rgba(227,228,226,0.22);font-weight:bold">········</span><span style="color:#9cdcfe">menuBar</span><span style="color:#d4d4d4">.</span><span style="color:#9cdcfe">id</span><span style="color:rgba(227,228,226,0.22);font-weight:bold">·</span><span style="color:#d4d4d4">=</span><span style="color:rgba(227,228,226,0.22);font-weight:bold">·</span><span style="color:#ce9178">&#x27;theia:menubar&#x27;</span><span style="color:#d4d4d4">;</span></div>
<div class="m" style="right:1523px;top:228.3px;font-size:24px;line-height:36px;color:#858585;text-align:right;">47</div>
<div class="m" style="left:161px;top:228.3px;font-size:24px;line-height:36px;"><span style="color:rgba(227,228,226,0.22);font-weight:bold">········</span><span style="color:#569cd6">const</span><span style="color:rgba(227,228,226,0.22);font-weight:bold">·</span><span style="color:#9cdcfe">menuModel</span><span style="color:rgba(227,228,226,0.22);font-weight:bold">·</span><span style="color:#d4d4d4">=</span><span style="color:rgba(227,228,226,0.22);font-weight:bold">·</span><span style="color:#569cd6">this</span><span style="color:#d4d4d4">.</span><span style="color:#9cdcfe">menuProvider</span><span style="color:#d4d4d4">.</span><span style="color:#dcdcaa">getMenu</span><span style="color:#d4d4d4">(</span><span style="color:#9cdcfe">MAIN_MENU_BAR</span><span style="color:#d4d4d4">);</span></div>
<div class="m" style="right:1523px;top:264.3px;font-size:24px;line-height:36px;color:#858585;text-align:right;">48</div>
<div class="m" style="left:161px;top:264.3px;font-size:24px;line-height:36px;"><span style="color:rgba(227,228,226,0.22);font-weight:bold">········</span><span style="color:#569cd6">const</span><span style="color:rgba(227,228,226,0.22);font-weight:bold">·</span><span style="color:#9cdcfe">phosphorCommands</span><span style="color:rgba(227,228,226,0.22);font-weight:bold">·</span><span style="color:#d4d4d4">=</span><span style="color:rgba(227,228,226,0.22);font-weight:bold">·</span><span style="color:#569cd6">this</span><span style="color:#d4d4d4">.</span><span style="color:#dcdcaa">createPhosphorCommands</span><span style="color:#d4d4d4">(</span><span style="color:#9cdcfe">menuModel</span><span style="color:#d4d4d4">);</span></div>
<div class="m" style="right:1523px;top:300.3px;font-size:24px;line-height:36px;color:#858585;text-align:right;">49</div>
<div class="m" style="left:161px;top:300.3px;font-size:24px;line-height:36px;"><span style="color:rgba(227,228,226,0.22);font-weight:bold">········</span><span style="color:#6a9955">//</span><span style="color:rgba(227,228,226,0.22);font-weight:bold">·</span><span style="color:#6a9955">for</span><span style="color:rgba(227,228,226,0.22);font-weight:bold">·</span><span style="color:#6a9955">the</span><span style="color:rgba(227,228,226,0.22);font-weight:bold">·</span><span style="color:#6a9955">main</span><span style="color:rgba(227,228,226,0.22);font-weight:bold">·</span><span style="color:#6a9955">menu</span><span style="color:rgba(227,228,226,0.22);font-weight:bold">·</span><span style="color:#6a9955">we</span><span style="color:rgba(227,228,226,0.22);font-weight:bold">·</span><span style="color:#6a9955">want</span><span style="color:rgba(227,228,226,0.22);font-weight:bold">·</span><span style="color:#6a9955">all</span><span style="color:rgba(227,228,226,0.22);font-weight:bold">·</span><span style="color:#6a9955">items</span><span style="color:rgba(227,228,226,0.22);font-weight:bold">·</span><span style="color:#6a9955">to</span><span style="color:rgba(227,228,226,0.22);font-weight:bold">·</span><span style="color:#6a9955">be</span><span style="color:rgba(227,228,226,0.22);font-weight:bold">·</span><span style="color:#6a9955">visible.</span></div>
<div class="m" style="right:1523px;top:336.3px;font-size:24px;line-height:36px;color:#858585;text-align:right;">50</div>
<div class="m" style="left:161px;top:336.3px;font-size:24px;line-height:36px;"><span style="color:rgba(227,228,226,0.22);font-weight:bold">········</span><span style="color:#9cdcfe">phosphorCommands</span><span style="color:#d4d4d4">.</span><span style="color:#dcdcaa">isVisible</span><span style="color:rgba(227,228,226,0.22);font-weight:bold">·</span><span style="color:#d4d4d4">=</span><span style="color:rgba(227,228,226,0.22);font-weight:bold">·</span><span style="color:#d4d4d4">()</span><span style="color:rgba(227,228,226,0.22);font-weight:bold">·</span><span style="color:#569cd6">=&gt;</span><span style="color:rgba(227,228,226,0.22);font-weight:bold">·</span><span style="color:#569cd6">true</span><span style="color:#d4d4d4">;</span></div>
<div class="m" style="right:1523px;top:372.3px;font-size:24px;line-height:36px;color:#858585;text-align:right;">51</div>
<div class="m" style="right:1523px;top:408.3px;font-size:24px;line-height:36px;color:#858585;text-align:right;">52</div>
<div class="m" style="left:161px;top:408.3px;font-size:24px;line-height:36px;"><span style="color:rgba(227,228,226,0.22);font-weight:bold">········</span><span style="color:#c586c0">for</span><span style="color:rgba(227,228,226,0.22);font-weight:bold">·</span><span style="color:#d4d4d4">(</span><span style="color:#569cd6">const</span><span style="color:rgba(227,228,226,0.22);font-weight:bold">·</span><span style="color:#9cdcfe">menu</span><span style="color:rgba(227,228,226,0.22);font-weight:bold">·</span><span style="color:#569cd6">of</span><span style="color:rgba(227,228,226,0.22);font-weight:bold">·</span><span style="color:#9cdcfe">menuModel</span><span style="color:#d4d4d4">.</span><span style="color:#9cdcfe">children</span><span style="color:#d4d4d4">)</span><span style="color:rgba(227,228,226,0.22);font-weight:bold">·</span><span style="color:#d4d4d4">{</span></div>
<div class="m" style="right:1523px;top:444.3px;font-size:24px;line-height:36px;color:#858585;text-align:right;">53</div>
<div class="m" style="left:161px;top:444.3px;font-size:24px;line-height:36px;"><span style="color:rgba(227,228,226,0.22);font-weight:bold">············</span><span style="color:#c586c0">if</span><span style="color:rgba(227,228,226,0.22);font-weight:bold">·</span><span style="color:#d4d4d4">(</span><span style="color:#9cdcfe">menu</span><span style="color:rgba(227,228,226,0.22);font-weight:bold">·</span><span style="color:#569cd6">instanceof</span><span style="color:rgba(227,228,226,0.22);font-weight:bold">·</span><span style="color:#4ec9b0">CompositeMenuNode</span><span style="color:#d4d4d4">)</span><span style="color:rgba(227,228,226,0.22);font-weight:bold">·</span><span style="color:#d4d4d4">{</span></div>
<div class="m" style="right:1523px;top:480.3px;font-size:24px;line-height:36px;color:#858585;text-align:right;">54</div>
<div class="m" style="left:161px;top:480.3px;font-size:24px;line-height:36px;"><span style="color:rgba(227,228,226,0.22);font-weight:bold">················</span><span style="color:#569cd6">const</span><span style="color:rgba(227,228,226,0.22);font-weight:bold">·</span><span style="color:#9cdcfe">menuWidget</span><span style="color:rgba(227,228,226,0.22);font-weight:bold">·</span><span style="color:#d4d4d4">=</span><span style="color:rgba(227,228,226,0.22);font-weight:bold">·</span><span style="color:#569cd6">new</span><span style="color:rgba(227,228,226,0.22);font-weight:bold">·</span><span style="color:#4ec9b0">DynamicMenuWidget</span><span style="color:#d4d4d4">(</span><span style="color:#9cdcfe">menu</span><span style="color:#d4d4d4">,</span><span style="color:rgba(227,228,226,0.22);font-weight:bold">·</span><span style="color:#d4d4d4">{</span><span style="color:rgba(227,228,226,0.22);font-weight:bold">·</span><span style="color:#9cdcfe">commands</span><span style="color:#d4d4d4">:</span><span style="color:rgba(227,228,226,0.22);font-weight:bold">·</span><span style="color:#9cdcfe">phosphorCommands</span><span style="color:rgba(227,228,226,0.22);font-weight:bold">·</span><span style="color:#d4d4d4">},</span><span style="color:rgba(227,228,226,0.22);font-weight:bold">·</span><span style="color:#569cd6">this</span><span style="color:#d4d4d4">.</span><span style="color:#9cdcfe">contextKeyService</span><span style="color:#d4d4d4">);</span></div>
<div class="m" style="right:1523px;top:516.3px;font-size:24px;line-height:36px;color:#858585;text-align:right;">55</div>
<div class="m" style="left:161px;top:516.3px;font-size:24px;line-height:36px;"><span style="color:rgba(227,228,226,0.22);font-weight:bold">················</span><span style="color:#9cdcfe">menuBar</span><span style="color:#d4d4d4">.</span><span style="color:#dcdcaa">addMenu</span><span style="color:#d4d4d4">(</span><span style="color:#9cdcfe">menuWidget</span><span style="color:#d4d4d4">);</span></div>
<div class="m" style="right:1523px;top:552.3px;font-size:24px;line-height:36px;color:#e8e8e8;text-align:right;">56</div>
<div class="m" style="left:161px;top:552.3px;font-size:24px;line-height:36px;"><span style="color:rgba(227,228,226,0.22);font-weight:bold">················</span><span style="color:#9cdcfe">menuBar</span><span style="color:#d4d4d4">.</span><span style="color:#9cdcfe">act</span></div>
<div class="m" style="right:1523px;top:588.3px;font-size:24px;line-height:36px;color:#858585;text-align:right;">57</div>
<div class="m" style="left:161px;top:588.3px;font-size:24px;line-height:36px;"><span style="color:rgba(227,228,226,0.22);font-weight:bold">············</span><span style="color:#d4d4d4">}</span></div>
<div class="m" style="right:1523px;top:624.3px;font-size:24px;line-height:36px;color:#858585;text-align:right;">58</div>
<div class="m" style="left:161px;top:624.3px;font-size:24px;line-height:36px;"><span style="color:rgba(227,228,226,0.22);font-weight:bold">········</span><span style="color:#d4d4d4">}</span></div>
<div class="m" style="right:1523px;top:660.3px;font-size:24px;line-height:36px;color:#858585;text-align:right;">59</div>
<div class="m" style="left:161px;top:660.3px;font-size:24px;line-height:36px;"><span style="color:rgba(227,228,226,0.22);font-weight:bold">········</span><span style="color:#c586c0">return</span><span style="color:rgba(227,228,226,0.22);font-weight:bold">·</span><span style="color:#9cdcfe">menuBar</span><span style="color:#d4d4d4">;</span></div>
<div class="m" style="right:1523px;top:696.3px;font-size:24px;line-height:36px;color:#858585;text-align:right;">60</div>
<div class="m" style="left:161px;top:696.3px;font-size:24px;line-height:36px;"><span style="color:rgba(227,228,226,0.22);font-weight:bold">····</span><span style="color:#d4d4d4">}</span></div>
<div class="m" style="right:1523px;top:732.3px;font-size:24px;line-height:36px;color:#858585;text-align:right;">61</div>
<div class="m" style="right:1523px;top:768.3px;font-size:24px;line-height:36px;color:#858585;text-align:right;">62</div>
<div class="m" style="left:161px;top:768.3px;font-size:24px;line-height:36px;"><span style="color:rgba(227,228,226,0.22);font-weight:bold">····</span><span style="color:#dcdcaa">createContextMenu</span><span style="color:#d4d4d4">(</span><span style="color:#9cdcfe">path</span><span style="color:#d4d4d4">:</span><span style="color:rgba(227,228,226,0.22);font-weight:bold">·</span><span style="color:#4ec9b0">MenuPath</span><span style="color:#d4d4d4">,</span><span style="color:rgba(227,228,226,0.22);font-weight:bold">·</span><span style="color:#9cdcfe">anchor</span><span style="color:#d4d4d4">?:</span><span style="color:rgba(227,228,226,0.22);font-weight:bold">·</span><span style="color:#4ec9b0">Anchor</span><span style="color:#d4d4d4">):</span><span style="color:rgba(227,228,226,0.22);font-weight:bold">·</span><span style="color:#4ec9b0">MenuWidget</span><span style="color:rgba(227,228,226,0.22);font-weight:bold">·</span><span style="color:#d4d4d4">{</span></div>
<div class="m" style="right:1523px;top:804.3px;font-size:24px;line-height:36px;color:#858585;text-align:right;">63</div>
<div class="m" style="left:161px;top:804.3px;font-size:24px;line-height:36px;"><span style="color:rgba(227,228,226,0.22);font-weight:bold">········</span><span style="color:#569cd6">const</span><span style="color:rgba(227,228,226,0.22);font-weight:bold">·</span><span style="color:#9cdcfe">menuModel</span><span style="color:rgba(227,228,226,0.22);font-weight:bold">·</span><span style="color:#d4d4d4">=</span><span style="color:rgba(227,228,226,0.22);font-weight:bold">·</span><span style="color:#569cd6">this</span><span style="color:#d4d4d4">.</span><span style="color:#9cdcfe">menuProvider</span><span style="color:#d4d4d4">.</span><span style="color:#dcdcaa">getMenu</span><span style="color:#d4d4d4">(</span><span style="color:#9cdcfe">path</span><span style="color:#d4d4d4">);</span></div>
<div class="m" style="right:1523px;top:840.3px;font-size:24px;line-height:36px;color:#858585;text-align:right;">64</div>
<div class="m" style="left:161px;top:840.3px;font-size:24px;line-height:36px;"><span style="color:rgba(227,228,226,0.22);font-weight:bold">········</span><span style="color:#569cd6">const</span><span style="color:rgba(227,228,226,0.22);font-weight:bold">·</span><span style="color:#9cdcfe">phosphorCommands</span><span style="color:rgba(227,228,226,0.22);font-weight:bold">·</span><span style="color:#d4d4d4">=</span><span style="color:rgba(227,228,226,0.22);font-weight:bold">·</span><span style="color:#569cd6">this</span><span style="color:#d4d4d4">.</span><span style="color:#dcdcaa">createPhosphorCommands</span><span style="color:#d4d4d4">(</span><span style="color:#9cdcfe">menuModel</span><span style="color:#d4d4d4">,</span><span style="color:rgba(227,228,226,0.22);font-weight:bold">·</span><span style="color:#9cdcfe">anchor</span><span style="color:#d4d4d4">);</span></div>
<div class="m" style="right:1523px;top:876.3px;font-size:24px;line-height:36px;color:#858585;text-align:right;">65</div>
<div class="m" style="right:1523px;top:912.3px;font-size:24px;line-height:36px;color:#858585;text-align:right;">66</div>
<div class="m" style="left:161px;top:912.3px;font-size:24px;line-height:36px;"><span style="color:rgba(227,228,226,0.22);font-weight:bold">········</span><span style="color:#569cd6">const</span><span style="color:rgba(227,228,226,0.22);font-weight:bold">·</span><span style="color:#9cdcfe">contextMenu</span><span style="color:rgba(227,228,226,0.22);font-weight:bold">·</span><span style="color:#d4d4d4">=</span><span style="color:rgba(227,228,226,0.22);font-weight:bold">·</span><span style="color:#569cd6">new</span><span style="color:rgba(227,228,226,0.22);font-weight:bold">·</span><span style="color:#4ec9b0">DynamicMenuWidget</span><span style="color:#d4d4d4">(</span><span style="color:#9cdcfe">menuModel</span><span style="color:#d4d4d4">,</span><span style="color:rgba(227,228,226,0.22);font-weight:bold">·</span><span style="color:#d4d4d4">{</span><span style="color:rgba(227,228,226,0.22);font-weight:bold">·</span><span style="color:#9cdcfe">commands</span><span style="color:#d4d4d4">:</span><span style="color:rgba(227,228,226,0.22);font-weight:bold">·</span><span style="color:#9cdcfe">phosphorCommands</span><span style="color:rgba(227,228,226,0.22);font-weight:bold">·</span><span style="color:#d4d4d4">},</span><span style="color:rgba(227,228,226,0.22);font-weight:bold">·</span><span style="color:#569cd6">this</span><span style="color:#d4d4d4">.</span><span style="color:#9cdcfe">contextKeyService</span><span style="color:#d4d4d4">);</span></div>
<div class="a" style="left:118px;top:550px;width:6px;height:36px;background:#2bd42b;"></div>
<svg class="a" style="left:171px;top:551px;" width="22" height="30" viewBox="0 0 22 30"><path d="M11 1a9 9 0 0 0-5 16.5V21h10v-3.5A9 9 0 0 0 11 1z" fill="#ffcc00"/><path d="M7 9h8M11 9v10" stroke="#1e1e1e" stroke-width="2"/><path d="M6.5 23.5h9M7.5 27h7" stroke="#e8e8e8" stroke-width="2.2"/></svg>
<svg class="a" style="left:391px;top:580px;" width="162" height="6" viewBox="0 0 162 6"><path d="M0,4 L2,0L6,4L10,0L14,4L18,0L22,4L26,0L30,4L34,0L38,4L42,0L46,4L50,0L54,4L58,0L62,4L66,0L70,4L74,0L78,4L82,0L86,4L90,0L94,4L98,0L102,4L106,0L110,4L114,0L118,4L122,0L126,4L130,0L134,4L138,0L142,4L146,0L150,4L154,0L158,4L162,0" fill="none" stroke="#f14c4c" stroke-width="1.6"/></svg>
<div class="a" style="left:161px;top:918px;width:1187px;height:20px;background:rgba(121,121,121,0.24);"></div>
<div class="a" style="left:1610px;top:0;width:20px;height:940px;background:rgba(0,0,0,0.12);border-left:1px solid #2e2e2e;"></div>
<div class="a" style="left:1610px;top:132px;width:20px;height:86px;background:rgba(121,121,121,0.42);"></div>
<div class="a" style="left:1610px;top:179px;width:10px;height:10px;background:#9a9a9a;"></div>
<div class="a" style="left:1620px;top:179px;width:10px;height:10px;background:#d03c3c;"></div>
<div class="a" style="left:550px;top:586px;width:860px;height:180px;background:#2f2f32;border:2px solid #4a4a4a;"></div>
<div class="a" style="left:552px;top:588px;width:856px;height:36px;background:#043359;"></div>
<svg class="a" style="left:557px;top:592px;" width="28" height="28" viewBox="0 0 28 28"><path d="M14 2.5L25 8.5V19.5L14 25.5L3 19.5V8.5z" fill="#2a2630"/><path d="M14 2.5L25 8.5V19.5L14 25.5L3 19.5V8.5z M3 8.5L14 14L25 8.5 M14 14V25.5" fill="none" stroke="#b180d7" stroke-width="2.2" stroke-linejoin="round"/></svg>
<div class="m" style="left:592px;top:590px;font-size:24px;line-height:36px;"><span style="color:#18a3ff;font-weight:bold;">act</span><span style="color:#e6e6e6;">ivate</span></div>
<svg class="a" style="left:556px;top:630px;" width="28" height="24" viewBox="0 0 28 24"><path d="M14 1.5L26.5 7.5V15L14 21.5L1.5 15V7.5z" fill="#80c4f5"/><path d="M14 4.2L22.5 8.2L14 12.2L5.5 8.2z" fill="#2a2630"/></svg>
<div class="m" style="left:592px;top:626px;font-size:24px;line-height:36px;"><span style="color:#18a3ff;font-weight:bold;">act</span><span style="color:#e6e6e6;">iveIndex</span></div>
<svg class="a" style="left:556px;top:666px;" width="28" height="24" viewBox="0 0 28 24"><path d="M14 1.5L26.5 7.5V15L14 21.5L1.5 15V7.5z" fill="#80c4f5"/><path d="M14 4.2L22.5 8.2L14 12.2L5.5 8.2z" fill="#2a2630"/></svg>
<div class="m" style="left:592px;top:662px;font-size:24px;line-height:36px;"><span style="color:#18a3ff;font-weight:bold;">act</span><span style="color:#e6e6e6;">iveMenu</span></div>
<svg class="a" style="left:557px;top:700px;" width="28" height="28" viewBox="0 0 28 28"><path d="M14 2.5L25 8.5V19.5L14 25.5L3 19.5V8.5z" fill="#2a2630"/><path d="M14 2.5L25 8.5V19.5L14 25.5L3 19.5V8.5z M3 8.5L14 14L25 8.5 M14 14V25.5" fill="none" stroke="#b180d7" stroke-width="2.2" stroke-linejoin="round"/></svg>
<div class="m" style="left:592px;top:698px;font-size:24px;line-height:36px;"><span style="color:#e6e6e6;">open</span><span style="color:#18a3ff;font-weight:bold;">Act</span><span style="color:#e6e6e6;">iveMenu</span></div>
<svg class="a" style="left:556px;top:738px;" width="28" height="24" viewBox="0 0 28 24"><path d="M14 1.5L26.5 7.5V15L14 21.5L1.5 15V7.5z" fill="#80c4f5"/><path d="M14 4.2L22.5 8.2L14 12.2L5.5 8.2z" fill="#2a2630"/></svg>
<div class="m" style="left:592px;top:734px;font-size:24px;line-height:36px;"><span style="color:#e6e6e6;">is</span><span style="color:#18a3ff;font-weight:bold;">At</span><span style="color:#e6e6e6;">ta</span><span style="color:#18a3ff;font-weight:bold;">c</span><span style="color:#e6e6e6;">hed</span></div>
<div class="m" style="left:891px;top:590px;font-size:24px;line-height:36px;color:#c8ccd2;">(method) Widget.activate(): void</div>
<svg class="a" style="left:1359px;top:595px;" width="24" height="24" viewBox="0 0 24 24"><circle cx="12" cy="12" r="11" fill="#3794ff"/><path d="M12 10v8" stroke="#fff" stroke-width="3"/><circle cx="12" cy="6.5" r="1.8" fill="#fff"/></svg>
</div>
<div class="a" style="left:712px;top:1302px;width:1630px;height:620px;background:#1b1b1b;"></div>
<div class="a" style="left:712px;top:1302px;width:1630px;height:4px;background:#333333;"></div>
<div class="a" style="left:712px;top:1306px;width:216px;height:2px;background:#c8c8c8;"></div>
<svg class="a" style="left:732px;top:1327px;" width="22" height="22" viewBox="0 0 22 22"><circle cx="11" cy="11" r="10.5" fill="#e6e6e6"/><path d="M11 4.5v8" stroke="#1d1d1d" stroke-width="3.4"/><rect x="9.2" y="14.8" width="3.6" height="3.4" fill="#1d1d1d"/></svg>
<div class="t" style="left:762.5px;top:1323.49px;font-size:26px;line-height:26px;color:#f0f0f0;">Problems</div>
<svg class="a" style="left:890px;top:1331px;" width="17" height="16" viewBox="0 0 17 16"><path d="M1.5 1L15.5 15M15.5 1L1.5 15" stroke="#d8d8d8" stroke-width="1.8"/></svg>
<svg class="a" style="left:947px;top:1324px;" width="26" height="23" viewBox="0 0 26 23"><path d="M2 1.5V23" stroke="#e6e6e6" stroke-width="2.2"/><path d="M3 2c5-3 9 3 14 1l7-1v12c-4 1-8 2-12 0c-3-1-6-1-9 1z" fill="#e6e6e6"/></svg>
<div class="t" style="left:978.5px;top:1323.49px;font-size:26px;line-height:26px;color:#f0f0f0;">Output</div>
<svg class="a" style="left:1131px;top:1327px;" width="24" height="19" viewBox="0 0 24 19"><rect x="1" y="1" width="22" height="17" fill="none" stroke="#e6e6e6" stroke-width="2"/><path d="M6 5l4 4.5L6 14" fill="none" stroke="#e6e6e6" stroke-width="2"/></svg>
<div class="t" style="left:1164.5px;top:1323.49px;font-size:26px;line-height:26px;color:#f0f0f0;">Debug Console</div>
<svg class="a" style="left:1420px;top:1327px;" width="24" height="20" viewBox="0 0 24 20"><path d="M1 2l9 7l-9 7" fill="none" stroke="#e6e6e6" stroke-width="2.2"/><path d="M12 18h11" stroke="#e6e6e6" stroke-width="2.2"/></svg>
<div class="t" style="left:1451px;top:1323.49px;font-size:26px;line-height:26px;color:#f0f0f0;">~/workspace/theia</div>
<div class="a" style="left:1724px;top:1308px;width:1.5px;height:62px;background:#262626;"></div>
<div class="a" style="left:712px;top:1370px;width:1630px;height:44px;background:#0f4d72;"></div>
<svg class="a" style="left:722px;top:1386px;" width="12" height="12" viewBox="0 0 12 12"><path d="M11 1V11H1z" fill="#dcdcdc"/></svg>
<div class="a" style="left:752px;top:1381.5px;width:21px;height:21px;background:#6ba9c3;"></div>
<div class="t" style="left:755px;top:1390px;font-size:12px;line-height:12px;color:#1f3a46;letter-spacing:-0.5px;">TS</div>
<div class="t" style="left:791.5px;top:1377.99px;font-size:26px;line-height:26px;color:#f0f0f0;">browser-menu-plugin.ts</div>
<div class="t" style="left:1078px;top:1381.37px;font-size:22px;line-height:22px;color:#b4bcc4;">packages/core/src/browser/menu</div>
<div class="a" style="left:1414px;top:1376px;width:32px;height:32px;border-radius:50%;background:#6b6b6b;"></div>
<div class="t" style="left:1424px;top:1383.07px;font-size:20px;line-height:20px;color:#ffffff;font-weight:bold;">3</div>
<svg class="a" style="left:764px;top:1424px;" width="23" height="23" viewBox="0 0 23 23"><circle cx="11.5" cy="11.5" r="11" fill="#e23a3b"/><path d="M7.5 7.5L15.5 15.5M15.5 7.5L7.5 15.5" stroke="#1d1d1d" stroke-width="3.2"/></svg>
<div class="t" style="left:796.5px;top:1421.99px;font-size:26px;line-height:26px;color:#b2b2b2;">[typescript]</div>
<div class="t" style="left:934.8px;top:1421.99px;font-size:26px;line-height:26px;color:#ececec;">Property &#x27;act&#x27; does not exist on type &#x27;DynamicMenuBarWidget&#x27;.</div>
<div class="t" style="left:1687px;top:1421.99px;font-size:26px;line-height:26px;color:#b2b2b2;">[2339]</div>
<div class="t" style="left:1767.5px;top:1421.99px;font-size:26px;line-height:26px;color:#b2b2b2;">(56, 25)</div>
<svg class="a" style="left:764px;top:1468px;" width="23" height="23" viewBox="0 0 23 23"><circle cx="11.5" cy="11.5" r="11" fill="#e23a3b"/><path d="M7.5 7.5L15.5 15.5M15.5 7.5L7.5 15.5" stroke="#1d1d1d" stroke-width="3.2"/></svg>
<div class="t" style="left:796.5px;top:1465.99px;font-size:26px;line-height:26px;color:#b2b2b2;">[tslint]</div>
<div class="t" style="left:874.6px;top:1465.99px;font-size:26px;line-height:26px;color:#ececec;">unused expression, expected an assignment or function call (no-unused-expression)</div>
<div class="t" style="left:1865.3px;top:1465.99px;font-size:26px;line-height:26px;color:#b2b2b2;">[100000]</div>
<div class="t" style="left:1975.4px;top:1465.99px;font-size:26px;line-height:26px;color:#b2b2b2;">(56, 17)</div>
<svg class="a" style="left:764px;top:1512px;" width="23" height="23" viewBox="0 0 23 23"><circle cx="11.5" cy="11.5" r="11" fill="#e23a3b"/><path d="M7.5 7.5L15.5 15.5M15.5 7.5L7.5 15.5" stroke="#1d1d1d" stroke-width="3.2"/></svg>
<div class="t" style="left:796.5px;top:1509.99px;font-size:26px;line-height:26px;color:#b2b2b2;">[tslint]</div>
<div class="t" style="left:875.5px;top:1509.99px;font-size:26px;line-height:26px;color:#ececec;">Missing semicolon (semicolon)</div>
<div class="t" style="left:1240.4px;top:1509.99px;font-size:26px;line-height:26px;color:#b2b2b2;">[100000]</div>
<div class="t" style="left:1350.4px;top:1509.99px;font-size:26px;line-height:26px;color:#b2b2b2;">(56, 28)</div>
<div class="a" style="left:2342px;top:298px;width:426px;height:1624px;background:#252526;"></div>
<div class="t" style="left:2379px;top:320.72px;font-size:21px;line-height:21px;color:#e6e6e6;">OUTLINE</div>
<svg class="a" style="left:2351.5px;top:375.5px;" width="12" height="12" viewBox="0 0 12 12"><path d="M11 1V11H1z" fill="#e0e0e0"/></svg>
<svg class="a" style="left:2383px;top:372px;" width="30" height="30" viewBox="0 0 30 30"><path d="M10.8 1.9L16.9 8L6.9 17.9L0.8 11.8z" fill="#e3a23a"/><path d="M13 12.7H22 M16 12.7V22.4H22" fill="none" stroke="#e3a23a" stroke-width="1.9"/><path d="M24 10L29 15L24 20L19 15z M24 19.5L28.7 24L24 28.2L19.3 24z" fill="#e3a23a"/></svg>
<div class="t" style="left:2422px;top:369.99px;font-size:26px;line-height:26px;color:#e2e2e2;">BrowserMainMenuFactory</div>
<svg class="a" style="left:2396px;top:416px;" width="28" height="28" viewBox="0 0 28 28"><path d="M5 22L12.5 14.5" stroke="#d8d8d8" stroke-width="6.5" stroke-linecap="round"/><circle cx="15" cy="11.9" r="8.3" fill="#d8d8d8"/><path d="M13.3 10.6L18.6 5.3L24.5 11.2L19.2 16.5z" fill="#252526"/></svg>
<div class="t" style="left:2433.5px;top:413.99px;font-size:26px;line-height:26px;color:#e2e2e2;">logger</div>
<svg class="a" style="left:2396px;top:460px;" width="28" height="28" viewBox="0 0 28 28"><path d="M5 22L12.5 14.5" stroke="#d8d8d8" stroke-width="6.5" stroke-linecap="round"/><circle cx="15" cy="11.9" r="8.3" fill="#d8d8d8"/><path d="M13.3 10.6L18.6 5.3L24.5 11.2L19.2 16.5z" fill="#252526"/></svg>
<div class="t" style="left:2433.5px;top:457.99px;font-size:26px;line-height:26px;color:#e2e2e2;">contextKeyService</div>
<svg class="a" style="left:2397px;top:507px;" width="24" height="26" viewBox="0 0 24 26"><path d="M12 1L23 7.1V18.6L12 24.9L1 18.6V7.1z" fill="#f2f2f2" stroke="#151515" stroke-width="0.9"/><path d="M12 3.9L20.6 8.9V16.6L12 21.6L3.4 16.6V8.9z M3.4 8.9L12 13.3L20.6 8.9 M12 13.3V21.6" fill="none" stroke="#6b0db0" stroke-width="1.9" stroke-linejoin="round"/></svg>
<div class="t" style="left:2433.5px;top:501.99px;font-size:26px;line-height:26px;color:#e2e2e2;">constructor</div>
<svg class="a" style="left:2396px;top:548px;" width="28" height="28" viewBox="0 0 28 28"><path d="M5 22L12.5 14.5" stroke="#d8d8d8" stroke-width="6.5" stroke-linecap="round"/><circle cx="15" cy="11.9" r="8.3" fill="#d8d8d8"/><path d="M13.3 10.6L18.6 5.3L24.5 11.2L19.2 16.5z" fill="#252526"/></svg>
<div class="t" style="left:2433.5px;top:545.99px;font-size:26px;line-height:26px;color:#e2e2e2;">commandRegistry</div>
<svg class="a" style="left:2396px;top:592px;" width="28" height="28" viewBox="0 0 28 28"><path d="M5 22L12.5 14.5" stroke="#d8d8d8" stroke-width="6.5" stroke-linecap="round"/><circle cx="15" cy="11.9" r="8.3" fill="#d8d8d8"/><path d="M13.3 10.6L18.6 5.3L24.5 11.2L19.2 16.5z" fill="#252526"/></svg>
<div class="t" style="left:2433.5px;top:589.99px;font-size:26px;line-height:26px;color:#e2e2e2;">keybindingRegistry</div>
<svg class="a" style="left:2396px;top:636px;" width="28" height="28" viewBox="0 0 28 28"><path d="M5 22L12.5 14.5" stroke="#d8d8d8" stroke-width="6.5" stroke-linecap="round"/><circle cx="15" cy="11.9" r="8.3" fill="#d8d8d8"/><path d="M13.3 10.6L18.6 5.3L24.5 11.2L19.2 16.5z" fill="#252526"/></svg>
<div class="t" style="left:2433.5px;top:633.99px;font-size:26px;line-height:26px;color:#e2e2e2;">menuProvider</div>
<div class="a" style="left:2342px;top:670px;width:426px;height:44px;background:#0f4d72;"></div>
<svg class="a" style="left:2371.0px;top:685px;" width="10" height="16" viewBox="0 0 10 16"><path d="M1 1L9.2 7.4L1 13.9z" fill="#e0e0e0"/></svg>
<svg class="a" style="left:2403px;top:685px;" width="20" height="22" viewBox="0 0 20 22"><path d="M10 1.1L18.9 6.4V15.5L10 20.7L1.1 15.5V6.4z M1.1 6.4L10 11.2L18.9 6.4 M10 11.2V20.7" fill="none" stroke="#c991ee" stroke-width="2.1" stroke-linejoin="round"/></svg>
<div class="t" style="left:2437.5px;top:677.99px;font-size:26px;line-height:26px;color:#e2e2e2;">createMenuBar</div>
<svg class="a" style="left:2371.0px;top:729px;" width="10" height="16" viewBox="0 0 10 16"><path d="M1 1L9.2 7.4L1 13.9z" fill="#e0e0e0"/></svg>
<svg class="a" style="left:2403px;top:729px;" width="20" height="22" viewBox="0 0 20 22"><path d="M10 1.1L18.9 6.4V15.5L10 20.7L1.1 15.5V6.4z M1.1 6.4L10 11.2L18.9 6.4 M10 11.2V20.7" fill="none" stroke="#c991ee" stroke-width="2.1" stroke-linejoin="round"/></svg>
<div class="t" style="left:2437.5px;top:721.99px;font-size:26px;line-height:26px;color:#e2e2e2;">createContextMenu</div>
<svg class="a" style="left:2371.0px;top:773px;" width="10" height="16" viewBox="0 0 10 16"><path d="M1 1L9.2 7.4L1 13.9z" fill="#e0e0e0"/></svg>
<svg class="a" style="left:2403px;top:773px;" width="20" height="22" viewBox="0 0 20 22"><path d="M10 1.1L18.9 6.4V15.5L10 20.7L1.1 15.5V6.4z M1.1 6.4L10 11.2L18.9 6.4 M10 11.2V20.7" fill="none" stroke="#c991ee" stroke-width="2.1" stroke-linejoin="round"/></svg>
<div class="t" style="left:2437.5px;top:765.99px;font-size:26px;line-height:26px;color:#e2e2e2;">createPhosphorComma...</div>
<svg class="a" style="left:2371.0px;top:817px;" width="10" height="16" viewBox="0 0 10 16"><path d="M1 1L9.2 7.4L1 13.9z" fill="#e0e0e0"/></svg>
<svg class="a" style="left:2403px;top:817px;" width="20" height="22" viewBox="0 0 20 22"><path d="M10 1.1L18.9 6.4V15.5L10 20.7L1.1 15.5V6.4z M1.1 6.4L10 11.2L18.9 6.4 M10 11.2V20.7" fill="none" stroke="#c991ee" stroke-width="2.1" stroke-linejoin="round"/></svg>
<div class="t" style="left:2437.5px;top:809.99px;font-size:26px;line-height:26px;color:#e2e2e2;">addPhosphorCommands</div>
<svg class="a" style="left:2371.0px;top:861px;" width="10" height="16" viewBox="0 0 10 16"><path d="M1 1L9.2 7.4L1 13.9z" fill="#e0e0e0"/></svg>
<svg class="a" style="left:2403px;top:861px;" width="20" height="22" viewBox="0 0 20 22"><path d="M10 1.1L18.9 6.4V15.5L10 20.7L1.1 15.5V6.4z M1.1 6.4L10 11.2L18.9 6.4 M10 11.2V20.7" fill="none" stroke="#c991ee" stroke-width="2.1" stroke-linejoin="round"/></svg>
<div class="t" style="left:2437.5px;top:853.99px;font-size:26px;line-height:26px;color:#e2e2e2;">addPhosphorCommand</div>
<svg class="a" style="left:2351.5px;top:903.5px;" width="12" height="12" viewBox="0 0 12 12"><path d="M11 1V11H1z" fill="#e0e0e0"/></svg>
<svg class="a" style="left:2383px;top:900px;" width="30" height="30" viewBox="0 0 30 30"><path d="M10.8 1.9L16.9 8L6.9 17.9L0.8 11.8z" fill="#e3a23a"/><path d="M13 12.7H22 M16 12.7V22.4H22" fill="none" stroke="#e3a23a" stroke-width="1.9"/><path d="M24 10L29 15L24 20L19 15z M24 19.5L28.7 24L24 28.2L19.3 24z" fill="#e3a23a"/></svg>
<div class="t" style="left:2422px;top:897.99px;font-size:26px;line-height:26px;color:#e2e2e2;">DynamicMenuBarWidget</div>
<svg class="a" style="left:2371.0px;top:949px;" width="10" height="16" viewBox="0 0 10 16"><path d="M1 1L9.2 7.4L1 13.9z" fill="#e0e0e0"/></svg>
<svg class="a" style="left:2400.8px;top:947px;" width="24" height="26" viewBox="0 0 24 26"><path d="M12 1L23 7.1V18.6L12 24.9L1 18.6V7.1z" fill="#f2f2f2" stroke="#151515" stroke-width="0.9"/><path d="M12 3.9L20.6 8.9V16.6L12 21.6L3.4 16.6V8.9z M3.4 8.9L12 13.3L20.6 8.9 M12 13.3V21.6" fill="none" stroke="#6b0db0" stroke-width="1.9" stroke-linejoin="round"/></svg>
<div class="t" style="left:2437.5px;top:941.99px;font-size:26px;line-height:26px;color:#e2e2e2;">constructor</div>
<svg class="a" style="left:2351.5px;top:991.5px;" width="12" height="12" viewBox="0 0 12 12"><path d="M11 1V11H1z" fill="#e0e0e0"/></svg>
<svg class="a" style="left:2383px;top:988px;" width="30" height="30" viewBox="0 0 30 30"><path d="M10.8 1.9L16.9 8L6.9 17.9L0.8 11.8z" fill="#e3a23a"/><path d="M13 12.7H22 M16 12.7V22.4H22" fill="none" stroke="#e3a23a" stroke-width="1.9"/><path d="M24 10L29 15L24 20L19 15z M24 19.5L28.7 24L24 28.2L19.3 24z" fill="#e3a23a"/></svg>
<div class="t" style="left:2422px;top:985.99px;font-size:26px;line-height:26px;color:#e2e2e2;">DynamicMenuWidget</div>
<svg class="a" style="left:2397px;top:1035px;" width="24" height="26" viewBox="0 0 24 26"><path d="M12 1L23 7.1V18.6L12 24.9L1 18.6V7.1z" fill="#f2f2f2" stroke="#151515" stroke-width="0.9"/><path d="M12 3.9L20.6 8.9V16.6L12 21.6L3.4 16.6V8.9z M3.4 8.9L12 13.3L20.6 8.9 M12 13.3V21.6" fill="none" stroke="#6b0db0" stroke-width="1.9" stroke-linejoin="round"/></svg>
<div class="t" style="left:2433.5px;top:1029.99px;font-size:26px;line-height:26px;color:#e2e2e2;">constructor</div>
<svg class="a" style="left:2396px;top:1076px;" width="28" height="28" viewBox="0 0 28 28"><path d="M5 22L12.5 14.5" stroke="#d8d8d8" stroke-width="6.5" stroke-linecap="round"/><circle cx="15" cy="11.9" r="8.3" fill="#d8d8d8"/><path d="M13.3 10.6L18.6 5.3L24.5 11.2L19.2 16.5z" fill="#252526"/></svg>
<div class="t" style="left:2433.5px;top:1073.99px;font-size:26px;line-height:26px;color:#e2e2e2;">menu</div>
<svg class="a" style="left:2396px;top:1120px;" width="28" height="28" viewBox="0 0 28 28"><path d="M5 22L12.5 14.5" stroke="#d8d8d8" stroke-width="6.5" stroke-linecap="round"/><circle cx="15" cy="11.9" r="8.3" fill="#d8d8d8"/><path d="M13.3 10.6L18.6 5.3L24.5 11.2L19.2 16.5z" fill="#252526"/></svg>
<div class="t" style="left:2433.5px;top:1117.99px;font-size:26px;line-height:26px;color:#e2e2e2;">options</div>
<svg class="a" style="left:2396px;top:1164px;" width="28" height="28" viewBox="0 0 28 28"><path d="M5 22L12.5 14.5" stroke="#d8d8d8" stroke-width="6.5" stroke-linecap="round"/><circle cx="15" cy="11.9" r="8.3" fill="#d8d8d8"/><path d="M13.3 10.6L18.6 5.3L24.5 11.2L19.2 16.5z" fill="#252526"/></svg>
<div class="t" style="left:2433.5px;top:1161.99px;font-size:26px;line-height:26px;color:#e2e2e2;">contextKeyService</div>
<svg class="a" style="left:2399px;top:1213px;" width="20" height="22" viewBox="0 0 20 22"><path d="M10 1.1L18.9 6.4V15.5L10 20.7L1.1 15.5V6.4z M1.1 6.4L10 11.2L18.9 6.4 M10 11.2V20.7" fill="none" stroke="#c991ee" stroke-width="2.1" stroke-linejoin="round"/></svg>
<div class="t" style="left:2433.5px;top:1205.99px;font-size:26px;line-height:26px;color:#e2e2e2;">aboutToShow</div>
<svg class="a" style="left:2371.0px;top:1257px;" width="10" height="16" viewBox="0 0 10 16"><path d="M1 1L9.2 7.4L1 13.9z" fill="#e0e0e0"/></svg>
<svg class="a" style="left:2403px;top:1257px;" width="20" height="22" viewBox="0 0 20 22"><path d="M10 1.1L18.9 6.4V15.5L10 20.7L1.1 15.5V6.4z M1.1 6.4L10 11.2L18.9 6.4 M10 11.2V20.7" fill="none" stroke="#c991ee" stroke-width="2.1" stroke-linejoin="round"/></svg>
<div class="t" style="left:2437.5px;top:1249.99px;font-size:26px;line-height:26px;color:#e2e2e2;">open</div>
<svg class="a" style="left:2371.0px;top:1301px;" width="10" height="16" viewBox="0 0 10 16"><path d="M1 1L9.2 7.4L1 13.9z" fill="#e0e0e0"/></svg>
<svg class="a" style="left:2403px;top:1301px;" width="20" height="22" viewBox="0 0 20 22"><path d="M10 1.1L18.9 6.4V15.5L10 20.7L1.1 15.5V6.4z M1.1 6.4L10 11.2L18.9 6.4 M10 11.2V20.7" fill="none" stroke="#c991ee" stroke-width="2.1" stroke-linejoin="round"/></svg>
<div class="t" style="left:2437.5px;top:1293.99px;font-size:26px;line-height:26px;color:#e2e2e2;">updateSubMenus</div>
<svg class="a" style="left:2371.0px;top:1345px;" width="10" height="16" viewBox="0 0 10 16"><path d="M1 1L9.2 7.4L1 13.9z" fill="#e0e0e0"/></svg>
<svg class="a" style="left:2403px;top:1345px;" width="20" height="22" viewBox="0 0 20 22"><path d="M10 1.1L18.9 6.4V15.5L10 20.7L1.1 15.5V6.4z M1.1 6.4L10 11.2L18.9 6.4 M10 11.2V20.7" fill="none" stroke="#c991ee" stroke-width="2.1" stroke-linejoin="round"/></svg>
<div class="t" style="left:2437.5px;top:1337.99px;font-size:26px;line-height:26px;color:#e2e2e2;">buildSubMenus</div>
<svg class="a" style="left:2351.5px;top:1387.5px;" width="12" height="12" viewBox="0 0 12 12"><path d="M11 1V11H1z" fill="#e0e0e0"/></svg>
<svg class="a" style="left:2383px;top:1384px;" width="30" height="30" viewBox="0 0 30 30"><path d="M10.8 1.9L16.9 8L6.9 17.9L0.8 11.8z" fill="#e3a23a"/><path d="M13 12.7H22 M16 12.7V22.4H22" fill="none" stroke="#e3a23a" stroke-width="1.9"/><path d="M24 10L29 15L24 20L19 15z M24 19.5L28.7 24L24 28.2L19.3 24z" fill="#e3a23a"/></svg>
<div class="t" style="left:2422px;top:1381.99px;font-size:26px;line-height:26px;color:#e2e2e2;">BrowserMenuBarContrib...</div>
<svg class="a" style="left:2397px;top:1431px;" width="24" height="26" viewBox="0 0 24 26"><path d="M12 1L23 7.1V18.6L12 24.9L1 18.6V7.1z" fill="#f2f2f2" stroke="#151515" stroke-width="0.9"/><path d="M12 3.9L20.6 8.9V16.6L12 21.6L3.4 16.6V8.9z M3.4 8.9L12 13.3L20.6 8.9 M12 13.3V21.6" fill="none" stroke="#6b0db0" stroke-width="1.9" stroke-linejoin="round"/></svg>
<div class="t" style="left:2433.5px;top:1425.99px;font-size:26px;line-height:26px;color:#e2e2e2;">constructor</div>
<svg class="a" style="left:2396px;top:1472px;" width="28" height="28" viewBox="0 0 28 28"><path d="M5 22L12.5 14.5" stroke="#d8d8d8" stroke-width="6.5" stroke-linecap="round"/><circle cx="15" cy="11.9" r="8.3" fill="#d8d8d8"/><path d="M13.3 10.6L18.6 5.3L24.5 11.2L19.2 16.5z" fill="#252526"/></svg>
<div class="t" style="left:2433.5px;top:1469.99px;font-size:26px;line-height:26px;color:#e2e2e2;">factory</div>
<svg class="a" style="left:2371.0px;top:1521px;" width="10" height="16" viewBox="0 0 10 16"><path d="M1 1L9.2 7.4L1 13.9z" fill="#e0e0e0"/></svg>
<svg class="a" style="left:2403px;top:1521px;" width="20" height="22" viewBox="0 0 20 22"><path d="M10 1.1L18.9 6.4V15.5L10 20.7L1.1 15.5V6.4z M1.1 6.4L10 11.2L18.9 6.4 M10 11.2V20.7" fill="none" stroke="#c991ee" stroke-width="2.1" stroke-linejoin="round"/></svg>
<div class="t" style="left:2437.5px;top:1513.99px;font-size:26px;line-height:26px;color:#e2e2e2;">onStart</div>
<svg class="a" style="left:2371.0px;top:1565px;" width="10" height="16" viewBox="0 0 10 16"><path d="M1 1L9.2 7.4L1 13.9z" fill="#e0e0e0"/></svg>
<svg class="a" style="left:2403px;top:1565px;" width="20" height="22" viewBox="0 0 20 22"><path d="M10 1.1L18.9 6.4V15.5L10 20.7L1.1 15.5V6.4z M1.1 6.4L10 11.2L18.9 6.4 M10 11.2V20.7" fill="none" stroke="#c991ee" stroke-width="2.1" stroke-linejoin="round"/></svg>
<div class="t" style="left:2437.5px;top:1557.99px;font-size:26px;line-height:26px;color:#e2e2e2;">createLogo</div>
<div class="a" style="left:2768px;top:298px;width:100px;height:1624px;background:linear-gradient(200deg,#383838 0%,#353533 40%,#333333 100%);"></div>
<svg class="a" style="left:2793px;top:329px;" width="48" height="38" viewBox="0 0 48 38"><rect x="0" y="1" width="7" height="6" fill="#f0f0f0"/><rect x="0" y="11" width="7" height="6" fill="#f0f0f0"/><rect x="0" y="21" width="7" height="6" fill="#f0f0f0"/><rect x="0" y="31" width="7" height="6" fill="#f0f0f0"/><rect x="10" y="1" width="38" height="6" fill="#f0f0f0"/><rect x="10" y="11" width="38" height="6" fill="#f0f0f0"/><rect x="10" y="21" width="38" height="6" fill="#f0f0f0"/><rect x="10" y="31" width="38" height="6" fill="#f0f0f0"/></svg>
<svg class="a" style="left:2793px;top:429px;" width="48" height="42" viewBox="0 0 48 42"><rect x="18" y="0" width="12" height="12" rx="2" fill="#c8c8c8"/><rect x="0" y="26" width="13" height="16" rx="3" fill="#c8c8c8"/><rect x="17.5" y="26" width="13" height="16" rx="3" fill="#c8c8c8"/><rect x="35" y="26" width="13" height="16" rx="3" fill="#c8c8c8"/><path d="M24 12v14M6 26v-6h36v6" fill="none" stroke="#c8c8c8" stroke-width="2.4"/></svg>
<div class="a" style="left:112px;top:1922px;width:2756px;height:38px;background:#007ed8;"></div>
<svg class="a" style="left:141px;top:1929px;" width="20" height="24" viewBox="0 0 20 24"><circle cx="4.5" cy="4.5" r="2.3" fill="none" stroke="#f2f2f2" stroke-width="1.7"/><circle cx="4.5" cy="19.5" r="2.3" fill="none" stroke="#f2f2f2" stroke-width="1.7"/><circle cx="14.5" cy="5" r="2.3" fill="none" stroke="#f2f2f2" stroke-width="1.7"/><path d="M4.5 6.8V17.2M14.5 7.3c0 5-9 5-9.5 9" fill="none" stroke="#f2f2f2" stroke-width="2"/></svg>
<div class="t" style="left:164.5px;top:1928.68px;font-size:24px;line-height:24px;color:#f2f2f2;">master*</div>
<svg class="a" style="left:274px;top:1930px;" width="22" height="22" viewBox="0 0 22 22"><path d="M18.5 8.5A8.3 8.3 0 0 0 3.6 7.5 M3.5 13.5A8.3 8.3 0 0 0 18.4 14.5" fill="none" stroke="#f2f2f2" stroke-width="3.6"/><path d="M21.5 1.5v9h-9z M0.5 20.5v-9h9z" fill="#f2f2f2"/></svg>
<div class="t" style="left:302px;top:1928.68px;font-size:24px;line-height:24px;color:#f2f2f2;">0</div>
<svg class="a" style="left:322px;top:1930px;" width="22" height="22" viewBox="0 0 22 22"><path d="M11 1.5V12" stroke="#f2f2f2" stroke-width="5" stroke-linecap="round"/><path d="M1 10.5H21L11 21z" fill="#f2f2f2" stroke="#f2f2f2" stroke-width="1.5" stroke-linejoin="round"/></svg>
<div class="t" style="left:351px;top:1928.68px;font-size:24px;line-height:24px;color:#f2f2f2;">0</div>
<svg class="a" style="left:371px;top:1930px;" width="22" height="22" viewBox="0 0 22 22"><path d="M11 20.5V10" stroke="#f2f2f2" stroke-width="5" stroke-linecap="round"/><path d="M1 11.5H21L11 1z" fill="#f2f2f2" stroke="#f2f2f2" stroke-width="1.5" stroke-linejoin="round"/></svg>
<svg class="a" style="left:420px;top:1930px;" width="22" height="22" viewBox="0 0 22 22"><circle cx="11" cy="11" r="11" fill="#f2f2f2"/><path d="M6.5 6.5L15.5 15.5M15.5 6.5L6.5 15.5" stroke="#007ed8" stroke-width="3"/></svg>
<div class="t" style="left:448.5px;top:1928.68px;font-size:24px;line-height:24px;color:#f2f2f2;">3</div>
<svg class="a" style="left:468px;top:1929px;" width="25" height="23" viewBox="0 0 25 23"><path d="M12.5 1L24.5 22.5H0.5z" fill="#f2f2f2"/><path d="M12.5 8v8" stroke="#007ed8" stroke-width="3"/><rect x="11" y="17.5" width="3" height="3" fill="#007ed8"/></svg>
<div class="t" style="left:499.5px;top:1928.68px;font-size:24px;line-height:24px;color:#f2f2f2;">0</div>
<div class="t" style="left:2227px;top:1928.68px;font-size:24px;line-height:24px;color:#f2f2f2;">Ln 56, Col 28</div>
<div class="t" style="left:2399px;top:1928.68px;font-size:24px;line-height:24px;color:#f2f2f2;">LF</div>
<div class="t" style="left:2453.5px;top:1928.68px;font-size:24px;line-height:24px;color:#f2f2f2;">Spaces: 4</div>
<div class="t" style="left:2591.5px;top:1928.68px;font-size:24px;line-height:24px;color:#f2f2f2;">TypeScript</div>
<div class="t" style="left:2730px;top:1928.68px;font-size:24px;line-height:24px;color:#f2f2f2;">3.1.3</div>
<div class="a" style="left:2812px;top:1932px;width:24px;height:20px;border:2.5px solid #f2f2f2;border-top-width:6px;border-radius:2px;"></div>
<div class="a" style="left:112px;top:76px;width:2756px;height:2px;background:linear-gradient(#b0b0b0,#6a6a6a);"></div>
<div class="a" style="left:112px;top:76px;width:1.5px;height:1884px;background:rgba(140,140,140,0.45);"></div>
<div class="a" style="left:2866.5px;top:76px;width:1.5px;height:1884px;background:rgba(140,140,140,0.45);"></div>
</div></body></html>
